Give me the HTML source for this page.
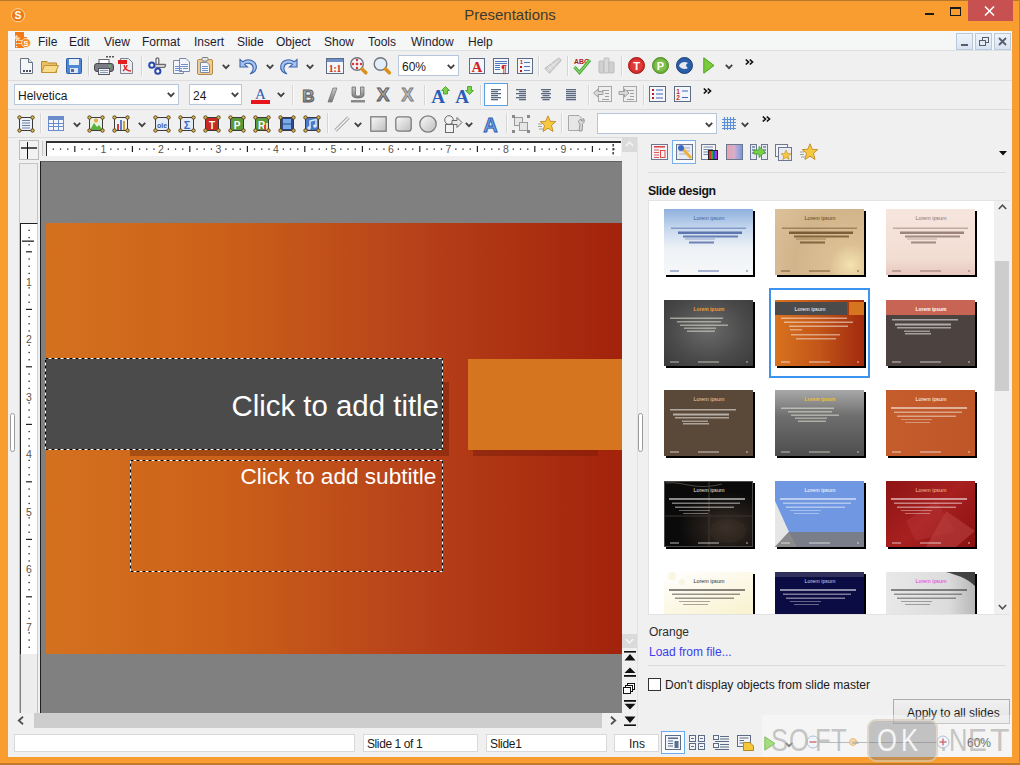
<!DOCTYPE html><html><head><meta charset="utf-8"><style>
*{margin:0;padding:0;box-sizing:border-box}
html,body{width:1020px;height:765px;overflow:hidden}
body{background:#F99D30;font-family:"Liberation Sans",sans-serif;position:relative;font-size:12px;color:#000}
.a{position:absolute}
.t{white-space:nowrap;line-height:1}
svg{overflow:visible}
</style></head><body><div class="a" style="left:0px;top:0px;width:1020px;height:1px;background:#B8782C"></div>
<div class="a" style="left:0px;top:763px;width:1020px;height:2px;background:#C07A2A"></div>
<div class="a" style="left:1019px;top:0px;width:1px;height:765px;background:#C8822C"></div>
<div class="a t" style="left:0px;top:7px;width:1020px;text-align:center;font-size:15px;color:#3C3A36">Presentations</div>
<svg class="a" style="left:10px;top:7px" width="17" height="17" viewBox="0 0 17 17" ><circle cx="8" cy="8.3" r="6.6" fill="#F07812" stroke="#FBE0B0" stroke-width="0.9"/><text x="8" y="12" font-family="Liberation Sans" font-weight="bold" font-size="10.5" fill="#fff" text-anchor="middle">S</text></svg>
<div class="a" style="left:925px;top:13px;width:9px;height:2px;background:#1A1A1A"></div>
<div class="a" style="left:950px;top:7px;width:11px;height:9px;border:1px solid #1A1A1A;border-top-width:2px"></div>
<div class="a" style="left:968px;top:0px;width:45px;height:21px;background:#C75050"></div>
<svg class="a" style="left:983px;top:6px" width="14" height="10" viewBox="0 0 14 10" ><path d="M2 0.5 L11 9.5 M11 0.5 L2 9.5" stroke="#fff" stroke-width="1.6"/></svg>
<div class="a" style="left:8px;top:31px;width:1004px;height:726px;background:#F0F0F0"></div>
<div class="a" style="left:8px;top:31px;width:1004px;height:20px;background:#F5F6F6;border-bottom:1px solid #DEDFE0"></div>
<svg class="a" style="left:14px;top:32px" width="20" height="18" viewBox="0 0 20 18" ><rect x="1" y="0" width="9" height="16" fill="#F27A18"/><path d="M3.5 3 A2.5 2.5 0 1 0 6 5.5 H3.5 Z" fill="#FCD8A8"/><rect x="2" y="8" width="1.2" height="1.2" fill="#fff"/><rect x="2" y="11" width="1.2" height="1.2" fill="#fff"/><rect x="2" y="14" width="1.2" height="1.2" fill="#fff"/><rect x="4" y="8" width="4" height="1" fill="#FCD8A8"/><rect x="4" y="11" width="4" height="1" fill="#FCD8A8"/><rect x="10" y="5" width="3" height="1.5" fill="#F27A18"/><circle cx="12" cy="11" r="4.5" fill="#F28A20" stroke="#FDE8C8" stroke-width="0.9"/><text x="12" y="14" font-family="Liberation Sans" font-weight="bold" font-size="7.5" fill="#fff" text-anchor="middle">S</text></svg>
<div class="a t" style="left:38px;top:35.5px;font-size:12px;color:#1E1B2E">File</div>
<div class="a t" style="left:69px;top:35.5px;font-size:12px;color:#1E1B2E">Edit</div>
<div class="a t" style="left:104px;top:35.5px;font-size:12px;color:#1E1B2E">View</div>
<div class="a t" style="left:142px;top:35.5px;font-size:12px;color:#1E1B2E">Format</div>
<div class="a t" style="left:194px;top:35.5px;font-size:12px;color:#1E1B2E">Insert</div>
<div class="a t" style="left:237px;top:35.5px;font-size:12px;color:#1E1B2E">Slide</div>
<div class="a t" style="left:276px;top:35.5px;font-size:12px;color:#1E1B2E">Object</div>
<div class="a t" style="left:324px;top:35.5px;font-size:12px;color:#1E1B2E">Show</div>
<div class="a t" style="left:368px;top:35.5px;font-size:12px;color:#1E1B2E">Tools</div>
<div class="a t" style="left:411px;top:35.5px;font-size:12px;color:#1E1B2E">Window</div>
<div class="a t" style="left:468px;top:35.5px;font-size:12px;color:#1E1B2E">Help</div>
<div class="a" style="left:956px;top:33px;width:17px;height:17px;background:linear-gradient(#EEF3FA,#D9E4F2);border:1px solid #B9C9DD"></div>
<div class="a" style="left:975px;top:33px;width:17px;height:17px;background:linear-gradient(#EEF3FA,#D9E4F2);border:1px solid #B9C9DD"></div>
<div class="a" style="left:994px;top:33px;width:17px;height:17px;background:linear-gradient(#EEF3FA,#D9E4F2);border:1px solid #B9C9DD"></div>
<div class="a" style="left:961px;top:44px;width:7px;height:2px;background:#555E6A"></div>
<svg class="a" style="left:979px;top:37px" width="10" height="9" viewBox="0 0 10 9" ><rect x="3.5" y="0.5" width="6" height="5" fill="none" stroke="#555E6A"/><rect x="0.5" y="3.5" width="6" height="5" fill="#E3EAF4" stroke="#555E6A"/></svg>
<svg class="a" style="left:998px;top:37px" width="9" height="9" viewBox="0 0 9 9" ><path d="M1 1 L8 8 M8 1 L1 8" stroke="#555E6A" stroke-width="1.8"/></svg>
<div class="a" style="left:8px;top:52px;width:1004px;height:29px;background:#F0F0F0;border-bottom:1px solid #DCDCDC"></div>
<div class="a" style="left:8px;top:81px;width:1004px;height:29px;background:#F0F0F0;border-bottom:1px solid #DCDCDC"></div>
<div class="a" style="left:8px;top:110px;width:1004px;height:28px;background:#F0F0F0;border-bottom:1px solid #DCDCDC"></div>
<svg class="a" style="left:20px;top:58px" width="13" height="16" viewBox="0 0 13 16" ><path d="M0.5 0.5 H8.5 L12.5 4.5 V15.5 H0.5 Z" fill="#F4F6FA" stroke="#6A7384"/><path d="M8.5 0.5 V4.5 H12.5" fill="#DDE3EC" stroke="#6A7384"/><rect x="3" y="12" width="2" height="2" fill="#4A5260"/><rect x="6" y="12" width="2" height="2" fill="#4A5260"/><rect x="9" y="12" width="2" height="2" fill="#4A5260"/></svg>
<svg class="a" style="left:41px;top:60px" width="18" height="13" viewBox="0 0 18 13" ><path d="M0.5 1.5 H6 L7.5 3 H15.5 V12.5 H0.5 Z" fill="#E9C060" stroke="#B88A2A"/><path d="M0.5 12.5 L3.5 5.5 H17.5 L14.5 12.5 Z" fill="#F8DC8A" stroke="#C09238"/></svg>
<svg class="a" style="left:66px;top:58px" width="16" height="16" viewBox="0 0 16 16" ><rect x="0.5" y="0.5" width="15" height="15" rx="1" fill="#4F86D4" stroke="#2E5EA8"/><rect x="3" y="1" width="10" height="6" fill="#E8EEF6"/><rect x="4" y="10" width="8" height="5" fill="#DDE6F2"/><rect x="5" y="11" width="3" height="3" fill="#4F6E9A"/></svg>
<div class="a" style="left:88px;top:56px;width:1px;height:20px;background:#D5D5D5;border-right:1px solid #FAFAFA;width:2px"></div>
<svg class="a" style="left:94px;top:56px" width="20" height="19" viewBox="0 0 20 19" ><rect x="12" y="0" width="2" height="1.5" fill="#555"/><rect x="15" y="0" width="2" height="1.5" fill="#555"/><rect x="18" y="0" width="2" height="1.5" fill="#555"/><rect x="5" y="3.5" width="10" height="5" fill="#fff" stroke="#666"/><rect x="0.5" y="7.5" width="19" height="8" rx="2.5" fill="#7A7E84" stroke="#44484E"/><rect x="15" y="9" width="2" height="2" fill="#5BC25B"/><rect x="4.5" y="12.5" width="11" height="6" fill="#EEF2F6" stroke="#55595F"/><path d="M6 14.5 H14 M6 16.5 H14" stroke="#8A9AB0"/></svg>
<svg class="a" style="left:118px;top:58px" width="16" height="16" viewBox="0 0 16 16" ><path d="M2.5 0.5 H10.5 L14.5 4.5 V15.5 H2.5 Z" fill="#E9ECF0" stroke="#7C818A"/><rect x="0" y="2" width="9" height="4" fill="#E41E1E"/><path d="M6 7 C7 12 10 13 13 13 M5 13 C7 11 9 9 9 7" stroke="#E02828" stroke-width="1.3" fill="none"/></svg>
<div class="a" style="left:141px;top:56px;width:1px;height:20px;background:#D5D5D5;border-right:1px solid #FAFAFA;width:2px"></div>
<svg class="a" style="left:148px;top:57px" width="18" height="18" viewBox="0 0 18 18" ><path d="M8 10 V2 C8 0.5 10.8 0.5 10.8 2 V10" stroke="#6A6A6A" stroke-width="1.3" fill="#F6F6F6"/><path d="M7.5 7.5 H17 C18 7.5 17.5 10.3 16 10.3 H7.5" stroke="#6A6A6A" stroke-width="1.3" fill="#F6F6F6"/><circle cx="3.8" cy="8.2" r="2.6" fill="#F4F8F0" stroke="#2A48B0" stroke-width="2"/><circle cx="9.8" cy="14.2" r="2.6" fill="#F4F8F0" stroke="#2A48B0" stroke-width="2"/></svg>
<svg class="a" style="left:173px;top:58px" width="17" height="16" viewBox="0 0 17 16" ><path d="M0.5 2.5 H7 L10.5 6 V15.5 H0.5 Z" fill="#F2F5FA" stroke="#7A8AA6"/><path d="M6.5 0.5 H13 L16.5 4 V13.5 H6.5 Z" fill="#F2F5FA" stroke="#7A8AA6"/><path d="M2 8.5 H9 M2 10.5 H9 M2 12.5 H9 M8 6.5 H15 M8 8.5 H15 M10 10.5 H15" stroke="#6E8FC8"/></svg>
<svg class="a" style="left:197px;top:57px" width="17" height="18" viewBox="0 0 17 18" ><rect x="0.5" y="2.5" width="15" height="15" rx="1.5" fill="#EFCB8E" stroke="#B58A48"/><rect x="5" y="0.5" width="6" height="3.5" rx="1" fill="#E8E8E8" stroke="#808080"/><path d="M3.5 5.5 H10 L12.5 8 V15.5 H3.5 Z" fill="#F4F6FA" stroke="#7A8AA6"/><path d="M5 9.5 H11 M5 11.5 H11 M5 13.5 H11" stroke="#6E8FC8"/></svg>
<svg class="a" style="left:222px;top:64px" width="8" height="6" viewBox="0 0 8 6" ><path d="M0.8 0.8 L4 4.2 L7.2 0.8" stroke="#404040" stroke-width="1.8" fill="none"/></svg>
<svg class="a" style="left:239px;top:58px" width="18" height="17" viewBox="0 0 18 17" ><path d="M2 2 V9 H9" fill="none" stroke="#3C64B0" stroke-width="0"/><path d="M1 1.5 L1 9 L8.5 9 L5.6 6.3 C8 4.5 13 4.8 14 9 C14.8 12 12.5 15 11 16 C15.5 15 18 11.5 17.2 7.5 C16 2 9 0 3.8 3.8 Z" fill="#A8C4EC" stroke="#3C64B0" stroke-width="1.1"/></svg>
<svg class="a" style="left:266px;top:64px" width="8" height="6" viewBox="0 0 8 6" ><path d="M0.8 0.8 L4 4.2 L7.2 0.8" stroke="#404040" stroke-width="1.8" fill="none"/></svg>
<svg class="a" style="left:280px;top:58px" width="18" height="17" viewBox="0 0 18 17" ><path d="M17 1.5 L17 9 L9.5 9 L12.4 6.3 C10 4.5 5 4.8 4 9 C3.2 12 5.5 15 7 16 C2.5 15 0 11.5 0.8 7.5 C2 2 9 0 14.2 3.8 Z" fill="#A8C4EC" stroke="#3C64B0" stroke-width="1.1"/></svg>
<svg class="a" style="left:306px;top:64px" width="8" height="6" viewBox="0 0 8 6" ><path d="M0.8 0.8 L4 4.2 L7.2 0.8" stroke="#404040" stroke-width="1.8" fill="none"/></svg>
<svg class="a" style="left:326px;top:58px" width="18" height="16" viewBox="0 0 18 16" ><rect x="0.5" y="0.5" width="17" height="15" fill="#F4F6FA" stroke="#5C6C86"/><rect x="1" y="1" width="16" height="3" fill="#6F8FC8"/><text x="9" y="13.5" font-family="Liberation Serif" font-weight="bold" font-size="9.5" fill="#D21E1E" text-anchor="middle">1:1</text></svg>
<svg class="a" style="left:350px;top:57px" width="18" height="18" viewBox="0 0 18 18" ><circle cx="7" cy="7" r="6.3" fill="#F4F4F6" stroke="#707580" stroke-width="1.4"/><path d="M12 12 L15.8 15.8" stroke="#D89020" stroke-width="3.6" stroke-linecap="round"/><rect x="5.8" y="5.8" width="2.4" height="2.4" fill="#D83030"/><circle cx="7" cy="3" r="1.2" fill="#E03030"/><circle cx="7" cy="11" r="1.2" fill="#E03030"/><circle cx="3" cy="7" r="1.2" fill="#E03030"/><circle cx="11" cy="7" r="1.2" fill="#E03030"/></svg>
<svg class="a" style="left:373px;top:57px" width="19" height="18" viewBox="0 0 19 18" ><circle cx="7.5" cy="7" r="6.3" fill="#E2EEF8" stroke="#707580" stroke-width="1.4"/><path d="M12.5 12 L16.3 15.8" stroke="#D89020" stroke-width="3.6" stroke-linecap="round"/></svg>
<div class="a" style="left:398px;top:55px;width:61px;height:21px;background:#fff;border:1px solid #B5C6DC"></div>
<div class="a t" style="left:402px;top:60.5px;font-size:12px;color:#1A1A1A">60%</div>
<svg class="a" style="left:447px;top:64px" width="8" height="6" viewBox="0 0 8 6" ><path d="M0.8 0.8 L4 4.2 L7.2 0.8" stroke="#404040" stroke-width="1.8" fill="none"/></svg>
<svg class="a" style="left:469px;top:58px" width="16" height="16" viewBox="0 0 16 16" ><rect x="0.5" y="0.5" width="15" height="15" fill="#F4F6FA" stroke="#5C6C86"/><text x="8" y="14" font-family="Liberation Serif" font-weight="bold" font-size="15" fill="#D01E1E" text-anchor="middle">A</text></svg>
<svg class="a" style="left:493px;top:58px" width="16" height="16" viewBox="0 0 16 16" ><rect x="0.5" y="0.5" width="15" height="15" fill="#F4F6FA" stroke="#5C6C86"/><path d="M2 3.5 H14 M2 5.5 H14 M2 7.5 H7 M2 9.5 H7 M2 11.5 H7" stroke="#5078C0"/><text x="11" y="14.5" font-family="Liberation Sans" font-weight="bold" font-size="10" fill="#D01E1E" text-anchor="middle">&#182;</text></svg>
<svg class="a" style="left:517px;top:58px" width="16" height="16" viewBox="0 0 16 16" ><rect x="0.5" y="0.5" width="15" height="15" fill="#F4F6FA" stroke="#5C6C86"/><text x="4.5" y="6" font-family="Liberation Sans" font-weight="bold" font-size="6" fill="#C01E1E" text-anchor="middle">1</text><rect x="3" y="8" width="2" height="2" fill="#C01E1E"/><rect x="3" y="12" width="2" height="2" fill="#C01E1E"/><path d="M7 4.5 H13 M7 8.5 H13 M7 12.5 H13" stroke="#5078C0"/></svg>
<div class="a" style="left:538px;top:56px;width:1px;height:20px;background:#D5D5D5;border-right:1px solid #FAFAFA;width:2px"></div>
<svg class="a" style="left:544px;top:57px" width="18" height="17" viewBox="0 0 18 17" ><path d="M0.8 11.5 L5.5 16.2 L16.8 4 C17.5 3 16 1 14.5 1.2 Z" fill="#D4D4D4" stroke="#B4B4B4" stroke-width="0.9"/><path d="M3 14 L14.5 3 M4.5 9 L8 12.5 M7.5 6 L11 9.5" stroke="#EAEAEA" stroke-width="1"/></svg>
<div class="a" style="left:567px;top:56px;width:1px;height:20px;background:#D5D5D5;border-right:1px solid #FAFAFA;width:2px"></div>
<svg class="a" style="left:573px;top:56px" width="19" height="19" viewBox="0 0 19 19" ><text x="1" y="7.5" font-family="Liberation Sans" font-weight="bold" font-size="8" fill="#A81818" textLength="15" lengthAdjust="spacingAndGlyphs">ABC</text><path d="M1.5 11 L6.5 16.5 L17 4" stroke="#4AA83A" stroke-width="3.2" fill="none"/><path d="M1.5 11 L6.5 16.5 L17 4" stroke="#9AE07A" stroke-width="1.1" fill="none"/></svg>
<svg class="a" style="left:598px;top:57px" width="17" height="17" viewBox="0 0 17 17" ><rect x="1" y="4" width="5" height="12" rx="1" fill="#D0D0D0" stroke="#BDBDBD"/><rect x="6" y="1" width="5" height="15" rx="1" fill="#DADADA" stroke="#BDBDBD"/><rect x="11" y="5" width="5" height="11" rx="1" fill="#D0D0D0" stroke="#BDBDBD"/></svg>
<div class="a" style="left:621px;top:56px;width:1px;height:20px;background:#D5D5D5;border-right:1px solid #FAFAFA;width:2px"></div>
<svg class="a" style="left:628px;top:57px" width="17" height="17" viewBox="0 0 17 17" ><circle cx="8.5" cy="8.5" r="8" fill="#D42A2A" stroke="#A01818"/><circle cx="8.5" cy="8.5" r="6" fill="#E23A3A"/><text x="8.5" y="13" font-family="Liberation Sans" font-weight="bold" font-size="11" fill="#fff" text-anchor="middle">T</text></svg>
<svg class="a" style="left:652px;top:57px" width="17" height="17" viewBox="0 0 17 17" ><circle cx="8.5" cy="8.5" r="8" fill="#6EAF3A" stroke="#4C8A24"/><circle cx="8.5" cy="8.5" r="6" fill="#7DC04A"/><text x="8.5" y="13" font-family="Liberation Sans" font-weight="bold" font-size="11" fill="#fff" text-anchor="middle">P</text></svg>
<svg class="a" style="left:676px;top:57px" width="17" height="17" viewBox="0 0 17 17" ><circle cx="8.5" cy="8.5" r="8" fill="#2A5EA8" stroke="#1C3E78"/><path d="M3 9 C4 5 9 4 12 6 C10 7 9 9 12 11 C9 13 5 12 3 9 Z" fill="#E8E8F0"/></svg>
<svg class="a" style="left:703px;top:57px" width="12" height="17" viewBox="0 0 12 17" ><path d="M0.8 0.8 L11 8.5 L0.8 16.2 Z" fill="#7ACC3C" stroke="#48A020"/></svg>
<svg class="a" style="left:725px;top:64px" width="8" height="6" viewBox="0 0 8 6" ><path d="M0.8 0.8 L4 4.2 L7.2 0.8" stroke="#404040" stroke-width="1.8" fill="none"/></svg>
<svg class="a" style="left:745px;top:59px" width="9" height="6" viewBox="0 0 9 6" ><path d="M0.8 0.5 L3.5 3 L0.8 5.5 M4.8 0.5 L7.5 3 L4.8 5.5" stroke="#101010" stroke-width="1.7" fill="none"/></svg>
<div class="a" style="left:14px;top:84px;width:165px;height:21px;background:#fff;border:1px solid #B5C6DC"></div>
<div class="a t" style="left:18px;top:89.5px;font-size:12px;color:#1A1A1A">Helvetica</div>
<svg class="a" style="left:167px;top:92px" width="8" height="6" viewBox="0 0 8 6" ><path d="M0.8 0.8 L4 4.2 L7.2 0.8" stroke="#404040" stroke-width="1.8" fill="none"/></svg>
<div class="a" style="left:189px;top:84px;width:53px;height:21px;background:#fff;border:1px solid #B5C6DC"></div>
<div class="a t" style="left:193px;top:89.5px;font-size:12px;color:#1A1A1A">24</div>
<svg class="a" style="left:231px;top:92px" width="8" height="6" viewBox="0 0 8 6" ><path d="M0.8 0.8 L4 4.2 L7.2 0.8" stroke="#404040" stroke-width="1.8" fill="none"/></svg>
<svg class="a" style="left:251px;top:87px" width="19" height="18" viewBox="0 0 19 18" ><text x="9.5" y="12" font-family="Liberation Serif" font-size="15" fill="#2A5CB8" text-anchor="middle">A</text><rect x="0" y="13" width="19" height="4" fill="#E8141C"/></svg>
<svg class="a" style="left:277px;top:92px" width="8" height="6" viewBox="0 0 8 6" ><path d="M0.8 0.8 L4 4.2 L7.2 0.8" stroke="#404040" stroke-width="1.8" fill="none"/></svg>
<div class="a" style="left:292px;top:85px;width:1px;height:20px;background:#D5D5D5;border-right:1px solid #FAFAFA;width:2px"></div>
<svg class="a" style="left:301px;top:87px" width="15" height="16" viewBox="0 0 15 16" ><defs><linearGradient id="bg3" x1="0" y1="0" x2="0" y2="1"><stop offset="0" stop-color="#C8C8C8"/><stop offset="1" stop-color="#7A7A7A"/></linearGradient></defs><text x="7.5" y="14.5" font-family="Liberation Sans" font-weight="bold" font-size="17" fill="url(#bg3)" stroke="#5A5A5A" stroke-width="0.9" text-anchor="middle">B</text></svg>
<svg class="a" style="left:327px;top:87px" width="11" height="16" viewBox="0 0 11 16" ><path d="M6 1 L10 1 L5 15 L1 15 Z" fill="url(#bg3)" stroke="#707070" stroke-width="0.7"/></svg>
<svg class="a" style="left:350px;top:86px" width="16" height="17" viewBox="0 0 16 17" ><path d="M2 1 V9 C2 13 14 13 14 9 V1 H10.5 V9 C10.5 10.5 5.5 10.5 5.5 9 V1 Z" fill="url(#bg3)" stroke="#606060" stroke-width="0.7"/><rect x="1" y="14" width="14" height="2.5" fill="#8A8A8A"/></svg>
<svg class="a" style="left:375px;top:87px" width="16" height="15" viewBox="0 0 16 15" ><text x="8" y="14" font-family="Liberation Sans" font-weight="bold" font-size="19" fill="url(#bg3)" stroke="#5A5A5A" stroke-width="0.9" text-anchor="middle">X</text></svg>
<svg class="a" style="left:400px;top:87px" width="15" height="15" viewBox="0 0 15 15" ><text x="7.5" y="14" font-family="Liberation Sans" font-weight="bold" font-size="18" fill="#BDBDBD" stroke="#7A7A7A" stroke-width="0.9" text-anchor="middle">X</text></svg>
<div class="a" style="left:424px;top:85px;width:1px;height:20px;background:#D5D5D5;border-right:1px solid #FAFAFA;width:2px"></div>
<svg class="a" style="left:431px;top:86px" width="19" height="18" viewBox="0 0 19 18" ><text x="7" y="17" font-family="Liberation Serif" font-weight="bold" font-size="19" fill="#2A5CB8" text-anchor="middle">A</text><path d="M14.5 0.5 L18.5 4.5 H16.5 V8 H12.5 V4.5 H10.5 Z" fill="#7CD04A" stroke="#3C9A20" stroke-width="0.8"/></svg>
<svg class="a" style="left:455px;top:86px" width="19" height="18" viewBox="0 0 19 18" ><text x="7" y="17" font-family="Liberation Serif" font-weight="bold" font-size="19" fill="#2A5CB8" text-anchor="middle">A</text><path d="M14.5 8.5 L18.5 4.5 H16.5 V0.5 H12.5 V4.5 H10.5 Z" fill="#7CD04A" stroke="#3C9A20" stroke-width="0.8"/></svg>
<div class="a" style="left:480px;top:85px;width:1px;height:20px;background:#D5D5D5;border-right:1px solid #FAFAFA;width:2px"></div>
<div class="a" style="left:484px;top:83px;width:24px;height:23px;background:#fff;border:1px solid #5AA0E6"></div>
<svg class="a" style="left:491px;top:89px" width="10" height="12" viewBox="0 0 10 12" ><rect x="0" y="0" width="10" height="1.3" fill="#5A6880"/><rect x="0" y="2" width="7" height="1.3" fill="#5A6880"/><rect x="0" y="4" width="10" height="1.3" fill="#5A6880"/><rect x="0" y="6" width="7" height="1.3" fill="#5A6880"/><rect x="0" y="8" width="10" height="1.3" fill="#5A6880"/><rect x="0" y="10" width="7" height="1.3" fill="#5A6880"/></svg>
<svg class="a" style="left:516px;top:89px" width="10" height="12" viewBox="0 0 10 12" ><rect x="0" y="0" width="10" height="1.3" fill="#5A6880"/><rect x="3" y="2" width="7" height="1.3" fill="#5A6880"/><rect x="0" y="4" width="10" height="1.3" fill="#5A6880"/><rect x="3" y="6" width="7" height="1.3" fill="#5A6880"/><rect x="0" y="8" width="10" height="1.3" fill="#5A6880"/><rect x="3" y="10" width="7" height="1.3" fill="#5A6880"/></svg>
<svg class="a" style="left:541px;top:89px" width="10" height="12" viewBox="0 0 10 12" ><rect x="0" y="0" width="10" height="1.3" fill="#5A6880"/><rect x="1.5" y="2" width="7" height="1.3" fill="#5A6880"/><rect x="0" y="4" width="10" height="1.3" fill="#5A6880"/><rect x="1.5" y="6" width="7" height="1.3" fill="#5A6880"/><rect x="0" y="8" width="10" height="1.3" fill="#5A6880"/><rect x="1.5" y="10" width="7" height="1.3" fill="#5A6880"/></svg>
<svg class="a" style="left:566px;top:89px" width="10" height="12" viewBox="0 0 10 12" ><rect x="0" y="0" width="10" height="1.3" fill="#5A6880"/><rect x="0" y="2" width="10" height="1.3" fill="#5A6880"/><rect x="0" y="4" width="10" height="1.3" fill="#5A6880"/><rect x="0" y="6" width="10" height="1.3" fill="#5A6880"/><rect x="0" y="8" width="10" height="1.3" fill="#5A6880"/><rect x="0" y="10" width="10" height="1.3" fill="#5A6880"/></svg>
<div class="a" style="left:588px;top:85px;width:1px;height:20px;background:#D5D5D5;border-right:1px solid #FAFAFA;width:2px"></div>
<svg class="a" style="left:593px;top:86px" width="19" height="16" viewBox="0 0 19 16" ><rect x="5.5" y="0.5" width="13" height="15" fill="#EEEEEE" stroke="#A8A8A8"/><path d="M9 4.5 H16 M12 7.5 H16 M12 10.5 H16 M9 13.5 H16" stroke="#A0A0A0"/><path d="M0.5 7 L5 3 V5.5 H10 V8.5 H5 V11 Z" fill="#DADADA" stroke="#A0A0A0"/></svg>
<svg class="a" style="left:618px;top:86px" width="19" height="16" viewBox="0 0 19 16" ><rect x="5.5" y="0.5" width="13" height="15" fill="#EEEEEE" stroke="#A8A8A8"/><path d="M9 4.5 H16 M12 7.5 H16 M12 10.5 H16 M9 13.5 H16" stroke="#A0A0A0"/><path d="M11 7 L6.5 3 V5.5 H1 V8.5 H6.5 V11 Z" fill="#DADADA" stroke="#A0A0A0"/></svg>
<div class="a" style="left:643px;top:85px;width:1px;height:20px;background:#D5D5D5;border-right:1px solid #FAFAFA;width:2px"></div>
<svg class="a" style="left:649px;top:86px" width="17" height="16" viewBox="0 0 17 16" ><rect x="0.5" y="0.5" width="16" height="15" fill="#F4F6FA" stroke="#5C6C86"/><rect x="3" y="3" width="2" height="2" fill="#C01E1E"/><rect x="3" y="7" width="2" height="2" fill="#C01E1E"/><rect x="3" y="11" width="2" height="2" fill="#C01E1E"/><path d="M7 4 H14 M7 8 H14 M7 12 H14" stroke="#3A68B8" stroke-width="1.2"/></svg>
<svg class="a" style="left:674px;top:86px" width="17" height="16" viewBox="0 0 17 16" ><rect x="0.5" y="0.5" width="16" height="15" fill="#F4F6FA" stroke="#5C6C86"/><text x="4" y="7.5" font-family="Liberation Sans" font-weight="bold" font-size="6.5" fill="#C01E1E" text-anchor="middle">1</text><text x="4" y="14" font-family="Liberation Sans" font-weight="bold" font-size="6.5" fill="#C01E1E" text-anchor="middle">2</text><path d="M8 5 H14 M8 11.5 H14" stroke="#3A68B8" stroke-width="1.2"/></svg>
<svg class="a" style="left:703px;top:88px" width="9" height="6" viewBox="0 0 9 6" ><path d="M0.8 0.5 L3.5 3 L0.8 5.5 M4.8 0.5 L7.5 3 L4.8 5.5" stroke="#101010" stroke-width="1.7" fill="none"/></svg>
<svg class="a" style="left:17px;top:115px" width="18" height="18" viewBox="0 0 18 18" ><rect x="3" y="3" width="12" height="12" fill="#EEF2F8"/><path d="M5 5.5 H13 M5 8 H13 M5 10.5 H13 M5 13 H13" stroke="#6A7EA2"/><rect x="2.5" y="2.5" width="13" height="13" fill="none" stroke="#3A3A3A"/><circle cx="2.5" cy="2.5" r="1.7" fill="#E0B850" stroke="#4A3A18" stroke-width="0.9"/><circle cx="15.5" cy="2.5" r="1.7" fill="#E0B850" stroke="#4A3A18" stroke-width="0.9"/><circle cx="2.5" cy="15.5" r="1.7" fill="#E0B850" stroke="#4A3A18" stroke-width="0.9"/><circle cx="15.5" cy="15.5" r="1.7" fill="#E0B850" stroke="#4A3A18" stroke-width="0.9"/></svg>
<div class="a" style="left:40px;top:113px;width:1px;height:20px;background:#D5D5D5;border-right:1px solid #FAFAFA;width:2px"></div>
<svg class="a" style="left:48px;top:116px" width="16" height="15" viewBox="0 0 16 15" ><rect x="0.5" y="0.5" width="15" height="14" fill="#F4F7FC" stroke="#6A8ACB"/><rect x="1" y="1" width="14" height="3" fill="#6A8ACB"/><path d="M0.5 7.5 H15.5 M0.5 10.5 H15.5 M5.5 0.5 V14.5 M10.5 0.5 V14.5" stroke="#6A8ACB"/></svg>
<svg class="a" style="left:73px;top:122px" width="8" height="6" viewBox="0 0 8 6" ><path d="M0.8 0.8 L4 4.2 L7.2 0.8" stroke="#404040" stroke-width="1.8" fill="none"/></svg>
<svg class="a" style="left:87px;top:115px" width="18" height="18" viewBox="0 0 18 18" ><rect x="3" y="3" width="12" height="12" fill="#E8F2E0"/><path d="M3 15 L7 8 L10 12 L12 10 L15 14 V15 Z" fill="#5CB040"/><circle cx="9" cy="5.5" r="2" fill="#F0A040"/><rect x="2.5" y="2.5" width="13" height="13" fill="none" stroke="#3A3A3A"/><circle cx="2.5" cy="2.5" r="1.7" fill="#E0B850" stroke="#4A3A18" stroke-width="0.9"/><circle cx="15.5" cy="2.5" r="1.7" fill="#E0B850" stroke="#4A3A18" stroke-width="0.9"/><circle cx="2.5" cy="15.5" r="1.7" fill="#E0B850" stroke="#4A3A18" stroke-width="0.9"/><circle cx="15.5" cy="15.5" r="1.7" fill="#E0B850" stroke="#4A3A18" stroke-width="0.9"/></svg>
<svg class="a" style="left:112px;top:115px" width="18" height="18" viewBox="0 0 18 18" ><rect x="3" y="3" width="12" height="12" fill="#F2F2F2"/><rect x="5" y="9" width="2" height="6" fill="#D04040"/><rect x="8" y="5" width="2" height="10" fill="#5A80C0"/><rect x="11" y="6" width="2" height="9" fill="#D0A040"/><rect x="2.5" y="2.5" width="13" height="13" fill="none" stroke="#3A3A3A"/><circle cx="2.5" cy="2.5" r="1.7" fill="#E0B850" stroke="#4A3A18" stroke-width="0.9"/><circle cx="15.5" cy="2.5" r="1.7" fill="#E0B850" stroke="#4A3A18" stroke-width="0.9"/><circle cx="2.5" cy="15.5" r="1.7" fill="#E0B850" stroke="#4A3A18" stroke-width="0.9"/><circle cx="15.5" cy="15.5" r="1.7" fill="#E0B850" stroke="#4A3A18" stroke-width="0.9"/></svg>
<svg class="a" style="left:138px;top:122px" width="8" height="6" viewBox="0 0 8 6" ><path d="M0.8 0.8 L4 4.2 L7.2 0.8" stroke="#404040" stroke-width="1.8" fill="none"/></svg>
<svg class="a" style="left:153px;top:115px" width="18" height="18" viewBox="0 0 18 18" ><rect x="3" y="3" width="12" height="12" fill="#E6ECF6"/><text x="9" y="12.5" font-family="Liberation Sans" font-weight="bold" font-size="7" fill="#3A5A9A" text-anchor="middle">ole</text><rect x="2.5" y="2.5" width="13" height="13" fill="none" stroke="#3A3A3A"/><circle cx="2.5" cy="2.5" r="1.7" fill="#E0B850" stroke="#4A3A18" stroke-width="0.9"/><circle cx="15.5" cy="2.5" r="1.7" fill="#E0B850" stroke="#4A3A18" stroke-width="0.9"/><circle cx="2.5" cy="15.5" r="1.7" fill="#E0B850" stroke="#4A3A18" stroke-width="0.9"/><circle cx="15.5" cy="15.5" r="1.7" fill="#E0B850" stroke="#4A3A18" stroke-width="0.9"/></svg>
<svg class="a" style="left:178px;top:115px" width="18" height="18" viewBox="0 0 18 18" ><rect x="3" y="3" width="12" height="12" fill="#E6ECF6"/><text x="9" y="13.5" font-family="Liberation Sans" font-weight="bold" font-size="11" fill="#3A6AC8" text-anchor="middle">&#931;</text><rect x="2.5" y="2.5" width="13" height="13" fill="none" stroke="#3A3A3A"/><circle cx="2.5" cy="2.5" r="1.7" fill="#E0B850" stroke="#4A3A18" stroke-width="0.9"/><circle cx="15.5" cy="2.5" r="1.7" fill="#E0B850" stroke="#4A3A18" stroke-width="0.9"/><circle cx="2.5" cy="15.5" r="1.7" fill="#E0B850" stroke="#4A3A18" stroke-width="0.9"/><circle cx="15.5" cy="15.5" r="1.7" fill="#E0B850" stroke="#4A3A18" stroke-width="0.9"/></svg>
<svg class="a" style="left:203px;top:115px" width="18" height="18" viewBox="0 0 18 18" ><rect x="3" y="3" width="12" height="12" fill="#C82A22"/><text x="9" y="13.5" font-family="Liberation Sans" font-weight="bold" font-size="10" fill="#fff" text-anchor="middle">T</text><rect x="2.5" y="2.5" width="13" height="13" fill="none" stroke="#3A3A3A"/><circle cx="2.5" cy="2.5" r="1.7" fill="#E0B850" stroke="#4A3A18" stroke-width="0.9"/><circle cx="15.5" cy="2.5" r="1.7" fill="#E0B850" stroke="#4A3A18" stroke-width="0.9"/><circle cx="2.5" cy="15.5" r="1.7" fill="#E0B850" stroke="#4A3A18" stroke-width="0.9"/><circle cx="15.5" cy="15.5" r="1.7" fill="#E0B850" stroke="#4A3A18" stroke-width="0.9"/></svg>
<svg class="a" style="left:228px;top:115px" width="18" height="18" viewBox="0 0 18 18" ><rect x="3" y="3" width="12" height="12" fill="#5A9A38"/><text x="9" y="13.5" font-family="Liberation Sans" font-weight="bold" font-size="10" fill="#fff" text-anchor="middle">P</text><rect x="2.5" y="2.5" width="13" height="13" fill="none" stroke="#3A3A3A"/><circle cx="2.5" cy="2.5" r="1.7" fill="#E0B850" stroke="#4A3A18" stroke-width="0.9"/><circle cx="15.5" cy="2.5" r="1.7" fill="#E0B850" stroke="#4A3A18" stroke-width="0.9"/><circle cx="2.5" cy="15.5" r="1.7" fill="#E0B850" stroke="#4A3A18" stroke-width="0.9"/><circle cx="15.5" cy="15.5" r="1.7" fill="#E0B850" stroke="#4A3A18" stroke-width="0.9"/></svg>
<svg class="a" style="left:253px;top:115px" width="18" height="18" viewBox="0 0 18 18" ><rect x="3" y="3" width="12" height="12" fill="#5A9A38"/><text x="8.5" y="13.5" font-family="Liberation Sans" font-weight="bold" font-size="10" fill="#fff" text-anchor="middle">R</text><rect x="11" y="10" width="2" height="5" fill="#E04040"/><rect x="13" y="8" width="2" height="7" fill="#F0E0A0"/><rect x="2.5" y="2.5" width="13" height="13" fill="none" stroke="#3A3A3A"/><circle cx="2.5" cy="2.5" r="1.7" fill="#E0B850" stroke="#4A3A18" stroke-width="0.9"/><circle cx="15.5" cy="2.5" r="1.7" fill="#E0B850" stroke="#4A3A18" stroke-width="0.9"/><circle cx="2.5" cy="15.5" r="1.7" fill="#E0B850" stroke="#4A3A18" stroke-width="0.9"/><circle cx="15.5" cy="15.5" r="1.7" fill="#E0B850" stroke="#4A3A18" stroke-width="0.9"/></svg>
<svg class="a" style="left:278px;top:115px" width="18" height="18" viewBox="0 0 18 18" ><rect x="3" y="3" width="12" height="12" fill="#2A4A8A"/><rect x="5" y="4" width="8" height="4.5" fill="#7AAAE8"/><rect x="5" y="9.5" width="8" height="4.5" fill="#7AAAE8"/><rect x="2.5" y="2.5" width="13" height="13" fill="none" stroke="#3A3A3A"/><circle cx="2.5" cy="2.5" r="1.7" fill="#E0B850" stroke="#4A3A18" stroke-width="0.9"/><circle cx="15.5" cy="2.5" r="1.7" fill="#E0B850" stroke="#4A3A18" stroke-width="0.9"/><circle cx="2.5" cy="15.5" r="1.7" fill="#E0B850" stroke="#4A3A18" stroke-width="0.9"/><circle cx="15.5" cy="15.5" r="1.7" fill="#E0B850" stroke="#4A3A18" stroke-width="0.9"/></svg>
<svg class="a" style="left:303px;top:115px" width="18" height="18" viewBox="0 0 18 18" ><rect x="3" y="3" width="12" height="12" fill="#4A7AC8"/><path d="M7 13 V6 L13 4.5 V11" stroke="#D8E8FA" stroke-width="1.5" fill="none"/><circle cx="6" cy="13" r="1.8" fill="#D8E8FA"/><circle cx="12" cy="11" r="1.8" fill="#D8E8FA"/><rect x="2.5" y="2.5" width="13" height="13" fill="none" stroke="#3A3A3A"/><circle cx="2.5" cy="2.5" r="1.7" fill="#E0B850" stroke="#4A3A18" stroke-width="0.9"/><circle cx="15.5" cy="2.5" r="1.7" fill="#E0B850" stroke="#4A3A18" stroke-width="0.9"/><circle cx="2.5" cy="15.5" r="1.7" fill="#E0B850" stroke="#4A3A18" stroke-width="0.9"/><circle cx="15.5" cy="15.5" r="1.7" fill="#E0B850" stroke="#4A3A18" stroke-width="0.9"/></svg>
<div class="a" style="left:327px;top:113px;width:1px;height:20px;background:#D5D5D5;border-right:1px solid #FAFAFA;width:2px"></div>
<svg class="a" style="left:334px;top:116px" width="16" height="16" viewBox="0 0 16 16" ><path d="M1.5 14.5 L14.5 1.5" stroke="#A8A8A8" stroke-width="3.5"/><path d="M1.5 14.5 L14.5 1.5" stroke="#F4F4F4" stroke-width="1.5"/></svg>
<svg class="a" style="left:354px;top:122px" width="8" height="6" viewBox="0 0 8 6" ><path d="M0.8 0.8 L4 4.2 L7.2 0.8" stroke="#404040" stroke-width="1.8" fill="none"/></svg>
<svg class="a" style="left:370px;top:116px" width="17" height="16" viewBox="0 0 17 16" ><defs><linearGradient id="gg" x1="0" y1="0" x2="1" y2="1"><stop offset="0" stop-color="#FAFAFA"/><stop offset="1" stop-color="#BDBDBD"/></linearGradient></defs><rect x="0.8" y="0.8" width="15.4" height="14.4" fill="url(#gg)" stroke="#7C7C7C" stroke-width="1.3"/></svg>
<svg class="a" style="left:395px;top:116px" width="17" height="16" viewBox="0 0 17 16" ><rect x="0.8" y="0.8" width="15.4" height="14.4" rx="3" fill="url(#gg)" stroke="#7C7C7C" stroke-width="1.3"/></svg>
<svg class="a" style="left:419px;top:115px" width="18" height="18" viewBox="0 0 18 18" ><circle cx="9" cy="9" r="8.2" fill="url(#gg)" stroke="#7C7C7C" stroke-width="1.3"/></svg>
<svg class="a" style="left:444px;top:115px" width="19" height="18" viewBox="0 0 19 18" ><circle cx="5" cy="5" r="4.3" fill="#F2F2F2" stroke="#6A6A6A"/><path d="M8 5.5 H13 V2.5 L18 7.5 L13 12.5 V9.5 H8 Z" fill="#E8E8E8" stroke="#6A6A6A"/><rect x="1.5" y="9.5" width="8" height="8" fill="#F2F2F2" stroke="#6A6A6A"/></svg>
<svg class="a" style="left:465px;top:122px" width="8" height="6" viewBox="0 0 8 6" ><path d="M0.8 0.8 L4 4.2 L7.2 0.8" stroke="#404040" stroke-width="1.8" fill="none"/></svg>
<svg class="a" style="left:481px;top:115px" width="19" height="18" viewBox="0 0 19 18" ><text x="9.5" y="17" font-family="Liberation Sans" font-weight="bold" font-size="20" fill="#6A9AE0" stroke="#2A5AB0" stroke-width="0.8" text-anchor="middle">A</text></svg>
<div class="a" style="left:506px;top:113px;width:1px;height:20px;background:#D5D5D5;border-right:1px solid #FAFAFA;width:2px"></div>
<svg class="a" style="left:512px;top:115px" width="18" height="18" viewBox="0 0 18 18" ><rect x="2.5" y="2.5" width="8" height="8" fill="#E6E6E6" stroke="#9A9A9A"/><rect x="7.5" y="7.5" width="8" height="8" fill="#E6E6E6" stroke="#9A9A9A"/><rect x="0" y="0" width="3" height="3" fill="#8A8A8A"/><rect x="15" y="0" width="3" height="3" fill="#8A8A8A"/><rect x="0" y="15" width="3" height="3" fill="#8A8A8A"/><rect x="15" y="15" width="3" height="3" fill="#8A8A8A"/></svg>
<svg class="a" style="left:538px;top:115px" width="18" height="18" viewBox="0 0 18 18" ><path d="M10 0.8 L12.3 6.3 L17.8 6.6 L13.5 10.2 L15 16.5 L10 13.2 L5 16.5 L6.5 10.2 L2.2 6.6 L7.7 6.3 Z" fill="#F6C840" stroke="#C08A20" stroke-width="0.9"/><path d="M0 9 H4 M0 11.5 H4 M1 14 H5" stroke="#A0A0A0"/></svg>
<div class="a" style="left:561px;top:113px;width:1px;height:20px;background:#D5D5D5;border-right:1px solid #FAFAFA;width:2px"></div>
<svg class="a" style="left:568px;top:114px" width="18" height="18" viewBox="0 0 18 18" ><path d="M0.5 1.5 H11 L14 4.5 V16.5 H0.5 Z" fill="#E6E6E6" stroke="#A8A8A8"/><path d="M13 5 C10 6 10 9 12 10 L11 17 H14 L14.5 10 C16.5 9 17 6 15.5 4.5 L15 7 H13.5 Z" fill="#D8D8D8" stroke="#8A8A8A" stroke-width="0.8"/></svg>
<div class="a" style="left:597px;top:113px;width:120px;height:21px;background:#fff;border:1px solid #B5C6DC"></div>
<svg class="a" style="left:705px;top:122px" width="8" height="6" viewBox="0 0 8 6" ><path d="M0.8 0.8 L4 4.2 L7.2 0.8" stroke="#404040" stroke-width="1.8" fill="none"/></svg>
<svg class="a" style="left:722px;top:117px" width="14" height="13" viewBox="0 0 14 13" ><path d="M0 2.5 H14 M0 5.5 H14 M0 8.5 H14 M0 11.5 H14 M2.5 0 V13 M5.5 0 V13 M8.5 0 V13 M11.5 0 V13" stroke="#5A90D8" stroke-width="1.1"/></svg>
<svg class="a" style="left:741px;top:122px" width="8" height="6" viewBox="0 0 8 6" ><path d="M0.8 0.8 L4 4.2 L7.2 0.8" stroke="#404040" stroke-width="1.8" fill="none"/></svg>
<svg class="a" style="left:762px;top:116px" width="9" height="6" viewBox="0 0 9 6" ><path d="M0.8 0.5 L3.5 3 L0.8 5.5 M4.8 0.5 L7.5 3 L4.8 5.5" stroke="#101010" stroke-width="1.7" fill="none"/></svg>
<div class="a" style="left:19px;top:140px;width:20px;height:20px;background:#F2F2F2;border:1px solid #BDBDBD"></div>
<div class="a" style="left:21px;top:147px;width:16px;height:2px;background:#555555"></div>
<div class="a" style="left:27px;top:142px;width:1px;height:17px;background:#111111"></div>
<div class="a" style="left:42px;top:141px;width:579px;height:15px;background:#EAEAEA;border-left:1px solid #C8C8C8"></div>
<div class="a" style="left:46px;top:141px;width:575px;height:15px;background:#FFFFFF;border-top:2px solid #303030;border-left:1px solid #303030"></div>
<svg class="a" style="left:46px;top:141px" width="575" height="15" viewBox="0 0 575 15" ><rect x="6.7" y="7.5" width="1.3" height="1.3" fill="#222"/><rect x="13.9" y="7.5" width="1.3" height="1.3" fill="#222"/><rect x="21.1" y="7.5" width="1.3" height="1.3" fill="#222"/><rect x="28.2" y="5" width="1.2" height="6" fill="#222"/><rect x="35.4" y="7.5" width="1.3" height="1.3" fill="#222"/><rect x="42.6" y="7.5" width="1.3" height="1.3" fill="#222"/><rect x="49.8" y="7.5" width="1.3" height="1.3" fill="#222"/><text x="57.5" y="12" font-family="Liberation Sans" font-size="10.5" fill="#5E5248" text-anchor="middle">1</text><rect x="64.2" y="7.5" width="1.3" height="1.3" fill="#222"/><rect x="71.4" y="7.5" width="1.3" height="1.3" fill="#222"/><rect x="78.6" y="7.5" width="1.3" height="1.3" fill="#222"/><rect x="85.8" y="5" width="1.2" height="6" fill="#222"/><rect x="92.9" y="7.5" width="1.3" height="1.3" fill="#222"/><rect x="100.1" y="7.5" width="1.3" height="1.3" fill="#222"/><rect x="107.3" y="7.5" width="1.3" height="1.3" fill="#222"/><text x="115.0" y="12" font-family="Liberation Sans" font-size="10.5" fill="#5E5248" text-anchor="middle">2</text><rect x="121.7" y="7.5" width="1.3" height="1.3" fill="#222"/><rect x="128.9" y="7.5" width="1.3" height="1.3" fill="#222"/><rect x="136.1" y="7.5" width="1.3" height="1.3" fill="#222"/><rect x="143.2" y="5" width="1.2" height="6" fill="#222"/><rect x="150.4" y="7.5" width="1.3" height="1.3" fill="#222"/><rect x="157.6" y="7.5" width="1.3" height="1.3" fill="#222"/><rect x="164.8" y="7.5" width="1.3" height="1.3" fill="#222"/><text x="172.5" y="12" font-family="Liberation Sans" font-size="10.5" fill="#5E5248" text-anchor="middle">3</text><rect x="179.2" y="7.5" width="1.3" height="1.3" fill="#222"/><rect x="186.4" y="7.5" width="1.3" height="1.3" fill="#222"/><rect x="193.6" y="7.5" width="1.3" height="1.3" fill="#222"/><rect x="200.8" y="5" width="1.2" height="6" fill="#222"/><rect x="207.9" y="7.5" width="1.3" height="1.3" fill="#222"/><rect x="215.1" y="7.5" width="1.3" height="1.3" fill="#222"/><rect x="222.3" y="7.5" width="1.3" height="1.3" fill="#222"/><text x="230.0" y="12" font-family="Liberation Sans" font-size="10.5" fill="#5E5248" text-anchor="middle">4</text><rect x="236.7" y="7.5" width="1.3" height="1.3" fill="#222"/><rect x="243.9" y="7.5" width="1.3" height="1.3" fill="#222"/><rect x="251.1" y="7.5" width="1.3" height="1.3" fill="#222"/><rect x="258.2" y="5" width="1.2" height="6" fill="#222"/><rect x="265.4" y="7.5" width="1.3" height="1.3" fill="#222"/><rect x="272.6" y="7.5" width="1.3" height="1.3" fill="#222"/><rect x="279.8" y="7.5" width="1.3" height="1.3" fill="#222"/><text x="287.5" y="12" font-family="Liberation Sans" font-size="10.5" fill="#5E5248" text-anchor="middle">5</text><rect x="294.2" y="7.5" width="1.3" height="1.3" fill="#222"/><rect x="301.4" y="7.5" width="1.3" height="1.3" fill="#222"/><rect x="308.6" y="7.5" width="1.3" height="1.3" fill="#222"/><rect x="315.8" y="5" width="1.2" height="6" fill="#222"/><rect x="322.9" y="7.5" width="1.3" height="1.3" fill="#222"/><rect x="330.1" y="7.5" width="1.3" height="1.3" fill="#222"/><rect x="337.3" y="7.5" width="1.3" height="1.3" fill="#222"/><text x="345.0" y="12" font-family="Liberation Sans" font-size="10.5" fill="#5E5248" text-anchor="middle">6</text><rect x="351.7" y="7.5" width="1.3" height="1.3" fill="#222"/><rect x="358.9" y="7.5" width="1.3" height="1.3" fill="#222"/><rect x="366.1" y="7.5" width="1.3" height="1.3" fill="#222"/><rect x="373.2" y="5" width="1.2" height="6" fill="#222"/><rect x="380.4" y="7.5" width="1.3" height="1.3" fill="#222"/><rect x="387.6" y="7.5" width="1.3" height="1.3" fill="#222"/><rect x="394.8" y="7.5" width="1.3" height="1.3" fill="#222"/><text x="402.5" y="12" font-family="Liberation Sans" font-size="10.5" fill="#5E5248" text-anchor="middle">7</text><rect x="409.2" y="7.5" width="1.3" height="1.3" fill="#222"/><rect x="416.4" y="7.5" width="1.3" height="1.3" fill="#222"/><rect x="423.6" y="7.5" width="1.3" height="1.3" fill="#222"/><rect x="430.8" y="5" width="1.2" height="6" fill="#222"/><rect x="437.9" y="7.5" width="1.3" height="1.3" fill="#222"/><rect x="445.1" y="7.5" width="1.3" height="1.3" fill="#222"/><rect x="452.3" y="7.5" width="1.3" height="1.3" fill="#222"/><text x="460.0" y="12" font-family="Liberation Sans" font-size="10.5" fill="#5E5248" text-anchor="middle">8</text><rect x="466.7" y="7.5" width="1.3" height="1.3" fill="#222"/><rect x="473.9" y="7.5" width="1.3" height="1.3" fill="#222"/><rect x="481.1" y="7.5" width="1.3" height="1.3" fill="#222"/><rect x="488.2" y="5" width="1.2" height="6" fill="#222"/><rect x="495.4" y="7.5" width="1.3" height="1.3" fill="#222"/><rect x="502.6" y="7.5" width="1.3" height="1.3" fill="#222"/><rect x="509.8" y="7.5" width="1.3" height="1.3" fill="#222"/><text x="517.5" y="12" font-family="Liberation Sans" font-size="10.5" fill="#5E5248" text-anchor="middle">9</text><rect x="524.2" y="7.5" width="1.3" height="1.3" fill="#222"/><rect x="531.4" y="7.5" width="1.3" height="1.3" fill="#222"/><rect x="538.6" y="7.5" width="1.3" height="1.3" fill="#222"/><rect x="545.8" y="5" width="1.2" height="6" fill="#222"/><rect x="552.9" y="7.5" width="1.3" height="1.3" fill="#222"/><rect x="560.1" y="7.5" width="1.3" height="1.3" fill="#222"/><rect x="567.3" y="7.5" width="1.3" height="1.3" fill="#222"/><rect x="566.5" y="3" width="1.3" height="2.5" fill="#222"/><rect x="566.5" y="7" width="1.3" height="2.5" fill="#222"/><rect x="566.5" y="11" width="1.3" height="2.5" fill="#222"/></svg>
<div class="a" style="left:40px;top:161px;width:582px;height:552px;background:#808080;border-left:1px solid #1E1E1E;border-top:1px solid #606060"></div>
<div class="a" style="left:19px;top:163px;width:19px;height:550px;background:#EDEDED;border:1px solid #C4C4C4;border-bottom:none"></div>
<div class="a" style="left:20px;top:223px;width:18px;height:431px;background:#FFFFFF;border-top:1px solid #202020;border-left:1px solid #202020;border-right:1px solid #D0D0D0"></div>
<div class="a" style="left:20px;top:654px;width:1px;height:59px;background:#808080"></div>
<svg class="a" style="left:20px;top:223px" width="17" height="431" viewBox="0 0 17 431" ><rect x="8.5" y="6.7" width="1.3" height="1.3" fill="#222"/><rect x="8.5" y="13.9" width="1.3" height="1.3" fill="#222"/><rect x="8.5" y="21.1" width="1.3" height="1.3" fill="#222"/><rect x="6" y="28.2" width="6" height="1.2" fill="#222"/><rect x="8.5" y="35.4" width="1.3" height="1.3" fill="#222"/><rect x="8.5" y="42.6" width="1.3" height="1.3" fill="#222"/><rect x="8.5" y="49.8" width="1.3" height="1.3" fill="#222"/><text x="9" y="62.5" font-family="Liberation Sans" font-size="10.5" fill="#5E5248" text-anchor="middle">1</text><rect x="8.5" y="64.2" width="1.3" height="1.3" fill="#222"/><rect x="8.5" y="71.4" width="1.3" height="1.3" fill="#222"/><rect x="8.5" y="78.6" width="1.3" height="1.3" fill="#222"/><rect x="6" y="85.8" width="6" height="1.2" fill="#222"/><rect x="8.5" y="92.9" width="1.3" height="1.3" fill="#222"/><rect x="8.5" y="100.1" width="1.3" height="1.3" fill="#222"/><rect x="8.5" y="107.3" width="1.3" height="1.3" fill="#222"/><text x="9" y="120.0" font-family="Liberation Sans" font-size="10.5" fill="#5E5248" text-anchor="middle">2</text><rect x="8.5" y="121.7" width="1.3" height="1.3" fill="#222"/><rect x="8.5" y="128.9" width="1.3" height="1.3" fill="#222"/><rect x="8.5" y="136.1" width="1.3" height="1.3" fill="#222"/><rect x="6" y="143.2" width="6" height="1.2" fill="#222"/><rect x="8.5" y="150.4" width="1.3" height="1.3" fill="#222"/><rect x="8.5" y="157.6" width="1.3" height="1.3" fill="#222"/><rect x="8.5" y="164.8" width="1.3" height="1.3" fill="#222"/><text x="9" y="177.5" font-family="Liberation Sans" font-size="10.5" fill="#5E5248" text-anchor="middle">3</text><rect x="8.5" y="179.2" width="1.3" height="1.3" fill="#222"/><rect x="8.5" y="186.4" width="1.3" height="1.3" fill="#222"/><rect x="8.5" y="193.6" width="1.3" height="1.3" fill="#222"/><rect x="6" y="200.8" width="6" height="1.2" fill="#222"/><rect x="8.5" y="207.9" width="1.3" height="1.3" fill="#222"/><rect x="8.5" y="215.1" width="1.3" height="1.3" fill="#222"/><rect x="8.5" y="222.3" width="1.3" height="1.3" fill="#222"/><text x="9" y="235.0" font-family="Liberation Sans" font-size="10.5" fill="#5E5248" text-anchor="middle">4</text><rect x="8.5" y="236.7" width="1.3" height="1.3" fill="#222"/><rect x="8.5" y="243.9" width="1.3" height="1.3" fill="#222"/><rect x="8.5" y="251.1" width="1.3" height="1.3" fill="#222"/><rect x="6" y="258.2" width="6" height="1.2" fill="#222"/><rect x="8.5" y="265.4" width="1.3" height="1.3" fill="#222"/><rect x="8.5" y="272.6" width="1.3" height="1.3" fill="#222"/><rect x="8.5" y="279.8" width="1.3" height="1.3" fill="#222"/><text x="9" y="292.5" font-family="Liberation Sans" font-size="10.5" fill="#5E5248" text-anchor="middle">5</text><rect x="8.5" y="294.2" width="1.3" height="1.3" fill="#222"/><rect x="8.5" y="301.4" width="1.3" height="1.3" fill="#222"/><rect x="8.5" y="308.6" width="1.3" height="1.3" fill="#222"/><rect x="6" y="315.8" width="6" height="1.2" fill="#222"/><rect x="8.5" y="322.9" width="1.3" height="1.3" fill="#222"/><rect x="8.5" y="330.1" width="1.3" height="1.3" fill="#222"/><rect x="8.5" y="337.3" width="1.3" height="1.3" fill="#222"/><text x="9" y="350.0" font-family="Liberation Sans" font-size="10.5" fill="#5E5248" text-anchor="middle">6</text><rect x="8.5" y="351.7" width="1.3" height="1.3" fill="#222"/><rect x="8.5" y="358.9" width="1.3" height="1.3" fill="#222"/><rect x="8.5" y="366.1" width="1.3" height="1.3" fill="#222"/><rect x="6" y="373.2" width="6" height="1.2" fill="#222"/><rect x="8.5" y="380.4" width="1.3" height="1.3" fill="#222"/><rect x="8.5" y="387.6" width="1.3" height="1.3" fill="#222"/><rect x="8.5" y="394.8" width="1.3" height="1.3" fill="#222"/><text x="9" y="407.5" font-family="Liberation Sans" font-size="10.5" fill="#5E5248" text-anchor="middle">7</text><rect x="8.5" y="409.2" width="1.3" height="1.3" fill="#222"/><rect x="8.5" y="416.4" width="1.3" height="1.3" fill="#222"/><rect x="8.5" y="423.6" width="1.3" height="1.3" fill="#222"/><rect x="2" y="17.5" width="12" height="1.3" fill="#222"/></svg>
<div class="a" style="left:46px;top:223px;width:576px;height:431px;background:linear-gradient(to right,#D4711F 0%,#CC6119 30%,#B8431A 62%,#A2220B 100%)"></div>
<div class="a" style="left:130px;top:450px;width:319px;height:6px;background:rgba(60,10,0,0.28)"></div>
<div class="a" style="left:442px;top:382px;width:7px;height:68px;background:rgba(60,10,0,0.28)"></div>
<div class="a" style="left:473px;top:449px;width:125px;height:7px;background:linear-gradient(to right,rgba(80,10,0,0.3),rgba(80,10,0,0.22))"></div>
<div class="a" style="left:468px;top:359px;width:154px;height:91px;background:#D57520"></div>
<div class="a" style="left:45px;top:358px;width:398px;height:92px;background:#4B4B4B"></div>
<svg class="a" style="left:45px;top:358px" width="398" height="92" viewBox="0 0 398 92" ><rect x="0.5" y="0.5" width="397" height="91" fill="none" stroke="#fff" stroke-width="1"/><rect x="0.5" y="0.5" width="397" height="91" fill="none" stroke="#000" stroke-width="1" stroke-dasharray="3 3"/></svg>
<div class="a t" style="left:231.5px;top:391px;font-size:29.4px;color:#fff">Click to add title</div>
<svg class="a" style="left:130px;top:460px" width="313" height="112" viewBox="0 0 313 112" ><rect x="0.5" y="0.5" width="312" height="111" fill="none" stroke="#fff" stroke-width="1"/><rect x="0.5" y="0.5" width="312" height="111" fill="none" stroke="#000" stroke-width="1" stroke-dasharray="3 3"/></svg>
<div class="a t" style="left:240.5px;top:466px;font-size:22.6px;color:#fff">Click to add subtitle</div>
<div class="a" style="left:8px;top:713px;width:614px;height:15px;background:#F0F0F0"></div>
<div class="a" style="left:34px;top:713px;width:568px;height:15px;background:#CDCDCD"></div>
<svg class="a" style="left:17px;top:716px" width="8" height="9" viewBox="0 0 8 9" ><path d="M6 0.8 L1.8 4.5 L6 8.2" stroke="#505050" stroke-width="1.8" fill="none"/></svg>
<svg class="a" style="left:609px;top:716px" width="8" height="9" viewBox="0 0 8 9" ><path d="M2 0.8 L6.2 4.5 L2 8.2" stroke="#505050" stroke-width="1.8" fill="none"/></svg>
<div class="a" style="left:622px;top:137px;width:16px;height:591px;background:#F0F0F0;border-right:1px solid #E2E2E2"></div>
<div class="a" style="left:622px;top:137px;width:15px;height:15px;background:#DADADA"></div>
<svg class="a" style="left:625px;top:141px" width="9" height="6" viewBox="0 0 9 6" ><path d="M0.8 5 L4.5 1.2 L8.2 5" stroke="#F4F4F4" stroke-width="1.5" fill="none"/></svg>
<div class="a" style="left:622px;top:634px;width:15px;height:14px;background:#DADADA"></div>
<svg class="a" style="left:625px;top:638px" width="9" height="6" viewBox="0 0 9 6" ><path d="M0.8 1 L4.5 4.8 L8.2 1" stroke="#F4F4F4" stroke-width="1.5" fill="none"/></svg>
<svg class="a" style="left:624px;top:651px" width="12" height="10" viewBox="0 0 12 10" ><rect x="0" y="0" width="12" height="1.6" fill="#111"/><path d="M0.5 9.5 L6 3 L11.5 9.5 Z" fill="#111"/></svg>
<svg class="a" style="left:624px;top:667px" width="12" height="10" viewBox="0 0 12 10" ><path d="M0.5 6 L6 0.5 L11.5 6 Z" fill="#111"/><rect x="0" y="8" width="12" height="1.8" fill="#111"/></svg>
<svg class="a" style="left:623px;top:683px" width="12" height="11" viewBox="0 0 12 11" ><rect x="4.5" y="0.5" width="7" height="6" fill="#fff" stroke="#111"/><rect x="2.5" y="2.5" width="7" height="6" fill="#fff" stroke="#111"/><rect x="0.5" y="4.5" width="7" height="6" fill="#fff" stroke="#111"/></svg>
<svg class="a" style="left:624px;top:700px" width="12" height="10" viewBox="0 0 12 10" ><rect x="0" y="0" width="12" height="1.8" fill="#111"/><path d="M0.5 3.8 L6 9.5 L11.5 3.8 Z" fill="#111"/></svg>
<svg class="a" style="left:624px;top:716px" width="12" height="10" viewBox="0 0 12 10" ><path d="M0.5 0.5 L6 7 L11.5 0.5 Z" fill="#111"/><rect x="0" y="8.4" width="12" height="1.6" fill="#111"/></svg>
<div class="a" style="left:10px;top:413px;width:5px;height:39px;background:#fff;border:1px solid #9A9A9A;border-radius:3px"></div>
<div class="a" style="left:638px;top:137px;width:374px;height:591px;background:#F0F0F0"></div>
<div class="a" style="left:672px;top:140px;width:24px;height:24px;background:#F8FBFE;border:1px solid #7AAEE8"></div>
<svg class="a" style="left:651px;top:144px" width="18" height="17" viewBox="0 0 18 17" ><rect x="0.5" y="0.5" width="16" height="15" fill="#F2F4F8" stroke="#6C7890"/><rect x="3" y="2" width="11" height="1.6" fill="#E04848"/><path d="M3 6 H8 M3 8.5 H8 M3 11 H8 M3 13.5 H8" stroke="#E05858" stroke-width="1.2"/><rect x="9.5" y="6.5" width="4.5" height="7" fill="none" stroke="#E04848"/></svg>
<svg class="a" style="left:676px;top:144px" width="18" height="17" viewBox="0 0 18 17" ><rect x="0.5" y="0.5" width="16" height="15" fill="#E8ECF2" stroke="#6C7890"/><path d="M3 4 H14 M3 7 H14 M3 10 H10" stroke="#A8B4C8"/><path d="M5 3 L15 14" stroke="#F0B040" stroke-width="3"/><circle cx="5" cy="4" r="3" fill="#3A6AC8"/></svg>
<svg class="a" style="left:701px;top:144px" width="18" height="17" viewBox="0 0 18 17" ><rect x="0.5" y="0.5" width="14" height="15" fill="#F2F4F8" stroke="#6C7890"/><path d="M2.5 3 H12 M2.5 5.5 H12 M2.5 8 H7 M2.5 10.5 H7" stroke="#7A88A0"/><rect x="7" y="6" width="10" height="10" fill="#222"/><rect x="8" y="7" width="2" height="8" fill="#E03030"/><rect x="10" y="7" width="2" height="8" fill="#30B030"/><rect x="12" y="7" width="2" height="8" fill="#3050E0"/><rect x="14" y="7" width="2" height="8" fill="#B030D0"/></svg>
<svg class="a" style="left:726px;top:144px" width="18" height="17" viewBox="0 0 18 17" ><defs><linearGradient id="tg4" x1="0" y1="0" x2="1" y2="0"><stop offset="0" stop-color="#F0A0A0"/><stop offset="0.5" stop-color="#D0B0D0"/><stop offset="1" stop-color="#7098E0"/></linearGradient></defs><rect x="0.5" y="0.5" width="16" height="15" fill="url(#tg4)" stroke="#6C7890"/></svg>
<svg class="a" style="left:750px;top:144px" width="18" height="17" viewBox="0 0 18 17" ><rect x="0.5" y="0.5" width="6" height="15" fill="#E8ECF2" stroke="#6C7890"/><rect x="11.5" y="0.5" width="6" height="15" fill="#E8ECF2" stroke="#6C7890"/><path d="M2 3 H5 M2 6 H5 M2 9 H5 M13 3 H16 M13 6 H16 M13 9 H16" stroke="#2A4A8A"/><path d="M4 6 H9 V2.5 L15 8 L9 13.5 V10 H4 Z" fill="#7AD04A" stroke="#3C9A20" stroke-width="0.8"/></svg>
<svg class="a" style="left:775px;top:144px" width="18" height="17" viewBox="0 0 18 17" ><rect x="0.5" y="0.5" width="12" height="12" fill="#F2F4F8" stroke="#6C7890"/><rect x="3.5" y="3.5" width="13" height="13" fill="#E8ECF2" stroke="#6C7890"/><path d="M11 6 L12.5 9.5 L16 9.8 L13.3 12 L14.2 15.5 L11 13.5 L7.8 15.5 L8.7 12 L6 9.8 L9.5 9.5 Z" fill="#F6C840" stroke="#C08A20" stroke-width="0.6"/></svg>
<svg class="a" style="left:800px;top:143px" width="18" height="18" viewBox="0 0 18 18" ><path d="M10 0.8 L12.3 6.3 L17.8 6.6 L13.5 10.2 L15 16.5 L10 13.2 L5 16.5 L6.5 10.2 L2.2 6.6 L7.7 6.3 Z" fill="#F6C840" stroke="#C08A20" stroke-width="0.9"/><path d="M0 9 H4 M0 11.5 H4 M1 14 H5" stroke="#A0A0A0"/></svg>
<svg class="a" style="left:999px;top:151px" width="8" height="5" viewBox="0 0 8 5" ><path d="M0 0 H8 L4 4.5 Z" fill="#111"/></svg>
<div class="a" style="left:648px;top:172px;width:358px;height:1px;background:#DCDCDC"></div>
<div class="a t" style="left:648px;top:184.5px;font-size:12.3px;font-weight:bold;color:#141414;letter-spacing:-0.4px">Slide design</div>
<div class="a" style="left:648px;top:200px;width:362px;height:415px;background:#fff;border:1px solid #E3E3E3"></div>
<div class="a" style="left:994px;top:201px;width:16px;height:413px;background:#F0F0F0"></div>
<div class="a" style="left:995px;top:261px;width:14px;height:130px;background:#CDCDCD"></div>
<svg class="a" style="left:998px;top:204px" width="9" height="6" viewBox="0 0 9 6" ><path d="M0.8 5 L4.5 1.2 L8.2 5" stroke="#505050" stroke-width="1.6" fill="none"/></svg>
<svg class="a" style="left:998px;top:604px" width="9" height="6" viewBox="0 0 9 6" ><path d="M0.8 1 L4.5 4.8 L8.2 1" stroke="#505050" stroke-width="1.6" fill="none"/></svg>
<div class="a" style="left:648px;top:201px;width:346px;height:413px;overflow:hidden"><div class="a" style="left:16px;top:8px;width:89px;height:66px;background:linear-gradient(to bottom,#8FB0DE 0%,#C6D8EE 30%,#EEF2F6 60%,#F6F7F9 100%);box-shadow:2px 2px 0 #000;overflow:hidden"><svg width="89" height="66" style="position:absolute;left:0;top:0"><rect x="7" y="18.5" width="75" height="1.5" fill="#1E3C8A" opacity="0.38"/><rect x="14" y="22.5" width="64" height="2.5" fill="#1E3C8A" opacity="0.64"/><rect x="19" y="26.5" width="55" height="2" fill="#1E3C8A" opacity="0.59"/><rect x="21" y="29.5" width="30" height="1" fill="#1E3C8A" opacity="0.38"/><rect x="25" y="32.5" width="25" height="2" fill="#1E3C8A" opacity="0.59"/><text x="45" y="10.5" font-family="Liberation Sans" font-size="5.8" font-weight="normal" fill="#3A5A9A" text-anchor="middle" textLength="31" lengthAdjust="spacingAndGlyphs">Lorem ipsum</text><rect x="6" y="61.5" width="9" height="1" fill="#1E3C8A" opacity="0.7"/><rect x="34" y="61.5" width="21" height="1" fill="#1E3C8A" opacity="0.7"/><rect x="82" y="61.5" width="2" height="1" fill="#1E3C8A" opacity="0.7"/></svg></div><div class="a" style="left:127px;top:8px;width:89px;height:66px;background:radial-gradient(circle at 85% 85%,#F4E2B0 0%,#DCC094 22%,#D2B48A 60%,#DCC29A 100%);box-shadow:2px 2px 0 #000;overflow:hidden"><svg width="89" height="66" style="position:absolute;left:0;top:0"><rect x="7" y="18.5" width="75" height="1.5" fill="#4A2A08" opacity="0.38"/><rect x="14" y="22.5" width="64" height="2.5" fill="#4A2A08" opacity="0.64"/><rect x="19" y="26.5" width="55" height="2" fill="#4A2A08" opacity="0.59"/><rect x="21" y="29.5" width="30" height="1" fill="#4A2A08" opacity="0.38"/><rect x="25" y="32.5" width="25" height="2" fill="#4A2A08" opacity="0.59"/><text x="45" y="10.5" font-family="Liberation Sans" font-size="5.8" font-weight="normal" fill="#5A4020" text-anchor="middle" textLength="31" lengthAdjust="spacingAndGlyphs">Lorem ipsum</text><rect x="6" y="61.5" width="9" height="1" fill="#4A2A08" opacity="0.7"/><rect x="34" y="61.5" width="21" height="1" fill="#4A2A08" opacity="0.7"/><rect x="82" y="61.5" width="2" height="1" fill="#4A2A08" opacity="0.7"/></svg></div><div class="a" style="left:238px;top:8px;width:89px;height:66px;background:linear-gradient(to bottom,#F6E6DE 0%,#F2DDD2 75%,#E8C8C0 100%);box-shadow:2px 2px 0 #000;overflow:hidden"><svg width="89" height="66" style="position:absolute;left:0;top:0"><rect x="7" y="18.5" width="75" height="1.5" fill="#6A5048" opacity="0.38"/><rect x="14" y="22.5" width="64" height="2.5" fill="#6A5048" opacity="0.64"/><rect x="19" y="26.5" width="55" height="2" fill="#6A5048" opacity="0.59"/><rect x="21" y="29.5" width="30" height="1" fill="#6A5048" opacity="0.38"/><rect x="25" y="32.5" width="25" height="2" fill="#6A5048" opacity="0.59"/><text x="45" y="10.5" font-family="Liberation Sans" font-size="5.8" font-weight="normal" fill="#8A7068" text-anchor="middle" textLength="31" lengthAdjust="spacingAndGlyphs">Lorem ipsum</text><rect x="6" y="61.5" width="9" height="1" fill="#6A5048" opacity="0.7"/><rect x="34" y="61.5" width="21" height="1" fill="#6A5048" opacity="0.7"/><rect x="82" y="61.5" width="2" height="1" fill="#6A5048" opacity="0.7"/></svg></div><div class="a" style="left:16px;top:99px;width:89px;height:66px;background:radial-gradient(ellipse at 50% 45%,#6A6A6A 0%,#4A4A4A 60%,#3A3A3A 100%);box-shadow:2px 2px 0 #000;overflow:hidden"><svg width="89" height="66" style="position:absolute;left:0;top:0"><rect x="6" y="17.5" width="53" height="1.5" fill="#F2F0E0" opacity="0.53"/><rect x="13" y="21" width="44" height="1.5" fill="#F2F0E0" opacity="0.50"/><rect x="16" y="24.5" width="48" height="1.5" fill="#F2F0E0" opacity="0.50"/><rect x="20" y="27.5" width="32" height="1.5" fill="#F2F0E0" opacity="0.46"/><rect x="23" y="30.5" width="28" height="1.5" fill="#F2F0E0" opacity="0.50"/><text x="45" y="10.5" font-family="Liberation Sans" font-size="5.8" font-weight="bold" fill="#F0A030" text-anchor="middle" textLength="31" lengthAdjust="spacingAndGlyphs">Lorem ipsum</text><rect x="6" y="61.5" width="9" height="1" fill="#F2F0E0" opacity="0.7"/><rect x="34" y="61.5" width="21" height="1" fill="#F2F0E0" opacity="0.7"/><rect x="82" y="61.5" width="2" height="1" fill="#F2F0E0" opacity="0.7"/></svg></div><div class="a" style="left:127px;top:99px;width:89px;height:66px;background:linear-gradient(to right,#D8731F 0%,#C25518 50%,#A22A0E 100%);box-shadow:2px 2px 0 #000;overflow:hidden"><svg width="89" height="66" style="position:absolute;left:0;top:0"><rect x="0" y="2" width="72" height="13" fill="#4B4B4B"/><rect x="74" y="2" width="15" height="13" fill="#D57520"/><rect x="6" y="17.5" width="66" height="1.5" fill="#FFFFFF" opacity="0.50"/><rect x="9" y="21.5" width="69" height="1.5" fill="#FFFFFF" opacity="0.50"/><rect x="14" y="25.5" width="59" height="1.5" fill="#FFFFFF" opacity="0.50"/><rect x="15" y="29" width="12" height="1.5" fill="#FFFFFF" opacity="0.43"/><rect x="16" y="34" width="49" height="1.5" fill="#FFFFFF" opacity="0.46"/><rect x="21" y="38" width="40" height="1.5" fill="#FFFFFF" opacity="0.46"/><text x="35" y="10.5" font-family="Liberation Sans" font-size="5.8" font-weight="normal" fill="#FFFFFF" text-anchor="middle" textLength="31" lengthAdjust="spacingAndGlyphs">Lorem ipsum</text><rect x="6" y="61.5" width="9" height="1" fill="#FFFFFF" opacity="0.7"/><rect x="34" y="61.5" width="21" height="1" fill="#FFFFFF" opacity="0.7"/><rect x="82" y="61.5" width="2" height="1" fill="#FFFFFF" opacity="0.7"/></svg></div><div class="a" style="left:238px;top:99px;width:89px;height:66px;background:#4C4240;box-shadow:2px 2px 0 #000;overflow:hidden"><svg width="89" height="66" style="position:absolute;left:0;top:0"><rect x="0" y="0" width="89" height="15" fill="#C86454"/><rect x="6" y="19" width="66" height="1.5" fill="#FFFFFF" opacity="0.53"/><rect x="9" y="23.5" width="56" height="2" fill="#FFFFFF" opacity="0.56"/><rect x="11" y="27" width="54" height="1.5" fill="#FFFFFF" opacity="0.50"/><rect x="18" y="30.5" width="26" height="1.5" fill="#FFFFFF" opacity="0.46"/><rect x="19" y="33" width="26" height="1.5" fill="#FFFFFF" opacity="0.50"/><text x="45" y="10.5" font-family="Liberation Sans" font-size="5.8" font-weight="bold" fill="#FFFFFF" text-anchor="middle" textLength="31" lengthAdjust="spacingAndGlyphs">Lorem ipsum</text><rect x="6" y="61.5" width="9" height="1" fill="#FFFFFF" opacity="0.7"/><rect x="34" y="61.5" width="21" height="1" fill="#FFFFFF" opacity="0.7"/><rect x="82" y="61.5" width="2" height="1" fill="#FFFFFF" opacity="0.7"/></svg></div><div class="a" style="left:16px;top:189px;width:89px;height:66px;background:#5A4838;box-shadow:2px 2px 0 #000;overflow:hidden"><svg width="89" height="66" style="position:absolute;left:0;top:0"><rect x="6" y="19" width="66" height="1.5" fill="#FFFFFF" opacity="0.53"/><rect x="9" y="23.5" width="56" height="2" fill="#FFFFFF" opacity="0.56"/><rect x="11" y="27" width="54" height="1.5" fill="#FFFFFF" opacity="0.50"/><rect x="18" y="30.5" width="26" height="1.5" fill="#FFFFFF" opacity="0.46"/><rect x="19" y="33" width="26" height="1.5" fill="#FFFFFF" opacity="0.50"/><text x="45" y="10.5" font-family="Liberation Sans" font-size="5.8" font-weight="normal" fill="#F0D0A8" text-anchor="middle" textLength="31" lengthAdjust="spacingAndGlyphs">Lorem ipsum</text><rect x="6" y="61.5" width="9" height="1" fill="#FFFFFF" opacity="0.7"/><rect x="34" y="61.5" width="21" height="1" fill="#FFFFFF" opacity="0.7"/><rect x="82" y="61.5" width="2" height="1" fill="#FFFFFF" opacity="0.7"/></svg></div><div class="a" style="left:127px;top:189px;width:89px;height:66px;background:linear-gradient(to bottom,#A8A8A8 0%,#6E6E6E 40%,#4E4E4E 100%);box-shadow:2px 2px 0 #000;overflow:hidden"><svg width="89" height="66" style="position:absolute;left:0;top:0"><rect x="6" y="17.5" width="53" height="1.5" fill="#F0F0E0" opacity="0.53"/><rect x="13" y="21" width="44" height="1.5" fill="#F0F0E0" opacity="0.50"/><rect x="16" y="24.5" width="48" height="1.5" fill="#F0F0E0" opacity="0.50"/><rect x="20" y="27.5" width="32" height="1.5" fill="#F0F0E0" opacity="0.46"/><rect x="23" y="30.5" width="28" height="1.5" fill="#F0F0E0" opacity="0.50"/><text x="45" y="10.5" font-family="Liberation Sans" font-size="5.8" font-weight="bold" fill="#F0C030" text-anchor="middle" textLength="31" lengthAdjust="spacingAndGlyphs">Lorem ipsum</text><rect x="6" y="61.5" width="9" height="1" fill="#F0F0E0" opacity="0.7"/><rect x="34" y="61.5" width="21" height="1" fill="#F0F0E0" opacity="0.7"/><rect x="82" y="61.5" width="2" height="1" fill="#F0F0E0" opacity="0.7"/></svg></div><div class="a" style="left:238px;top:189px;width:89px;height:66px;background:linear-gradient(to right,#C45C2C,#BE5628);box-shadow:2px 2px 0 #000;overflow:hidden"><svg width="89" height="66" style="position:absolute;left:0;top:0"><rect x="5" y="17" width="76" height="2" fill="#FFFFFF" opacity="0.53"/><rect x="8" y="21.5" width="68" height="1.5" fill="#FFFFFF" opacity="0.46"/><rect x="11" y="25.5" width="59" height="1.5" fill="#FFFFFF" opacity="0.46"/><rect x="15" y="29" width="31" height="1" fill="#FFFFFF" opacity="0.37"/><rect x="19" y="32" width="25" height="1" fill="#FFFFFF" opacity="0.37"/><text x="45" y="10.5" font-family="Liberation Sans" font-size="5.8" font-weight="normal" fill="#FFFFFF" text-anchor="middle" textLength="31" lengthAdjust="spacingAndGlyphs">Lorem ipsum</text><rect x="6" y="61.5" width="9" height="1" fill="#FFFFFF" opacity="0.7"/><rect x="34" y="61.5" width="21" height="1" fill="#FFFFFF" opacity="0.7"/><rect x="82" y="61.5" width="2" height="1" fill="#FFFFFF" opacity="0.7"/></svg></div><div class="a" style="left:16px;top:280px;width:89px;height:66px;background:radial-gradient(ellipse at 70% 70%,#3A2E26 0%,#0A0A0A 55%);box-shadow:2px 2px 0 #000;overflow:hidden"><svg width="89" height="66" style="position:absolute;left:0;top:0"><path d="M2 2 C20 0 30 10 58 3" stroke="#6A6058" stroke-width="1" fill="none" opacity="0.7"/><path d="M45 0 V66 M0 35 H89" stroke="#3A3430" stroke-width="1.2" fill="none"/><rect x="0.5" y="0.5" width="88" height="65" fill="none" stroke="#4A4A4A"/><ellipse cx="64" cy="50" rx="18" ry="12" fill="#4A3A30" opacity="0.22"/><rect x="5" y="17" width="76" height="2" fill="#FFFFFF" opacity="0.53"/><rect x="8" y="21.5" width="68" height="1.5" fill="#FFFFFF" opacity="0.46"/><rect x="11" y="25.5" width="59" height="1.5" fill="#FFFFFF" opacity="0.46"/><rect x="15" y="29" width="31" height="1" fill="#FFFFFF" opacity="0.37"/><rect x="19" y="32" width="25" height="1" fill="#FFFFFF" opacity="0.37"/><text x="45" y="10.5" font-family="Liberation Sans" font-size="5.8" font-weight="normal" fill="#E8E8E8" text-anchor="middle" textLength="31" lengthAdjust="spacingAndGlyphs">Lorem ipsum</text><rect x="6" y="61.5" width="9" height="1" fill="#FFFFFF" opacity="0.7"/><rect x="34" y="61.5" width="21" height="1" fill="#FFFFFF" opacity="0.7"/><rect x="82" y="61.5" width="2" height="1" fill="#FFFFFF" opacity="0.7"/></svg></div><div class="a" style="left:127px;top:280px;width:89px;height:66px;background:#7098E2;box-shadow:2px 2px 0 #000;overflow:hidden"><svg width="89" height="66" style="position:absolute;left:0;top:0"><path d="M0 20 L14 51 L0 66 Z" fill="#E6E6E6"/><path d="M0 66 L14 51 H89 V66 Z" fill="#7A7E88"/><path d="M0 66 L14 51 L22 66 Z" fill="#8A8A8A"/><rect x="5" y="17" width="76" height="2" fill="#FFFFFF" opacity="0.53"/><rect x="8" y="21.5" width="68" height="1.5" fill="#FFFFFF" opacity="0.46"/><rect x="11" y="25.5" width="59" height="1.5" fill="#FFFFFF" opacity="0.46"/><rect x="15" y="29" width="31" height="1" fill="#FFFFFF" opacity="0.37"/><rect x="19" y="32" width="25" height="1" fill="#FFFFFF" opacity="0.37"/><text x="45" y="10.5" font-family="Liberation Sans" font-size="5.8" font-weight="normal" fill="#FFFFFF" text-anchor="middle" textLength="31" lengthAdjust="spacingAndGlyphs">Lorem ipsum</text><rect x="6" y="61.5" width="9" height="1" fill="#FFFFFF" opacity="0.7"/><rect x="34" y="61.5" width="21" height="1" fill="#FFFFFF" opacity="0.7"/><rect x="82" y="61.5" width="2" height="1" fill="#FFFFFF" opacity="0.7"/></svg></div><div class="a" style="left:238px;top:280px;width:89px;height:66px;background:linear-gradient(135deg,#8E1414 0%,#A82020 50%,#8A1010 100%);box-shadow:2px 2px 0 #000;overflow:hidden"><svg width="89" height="66" style="position:absolute;left:0;top:0"><path d="M40 66 L60 30 L89 50 L70 66 Z" fill="#C04848" opacity="0.5"/><path d="M20 40 L50 20 L70 50 L30 60 Z" fill="#B83A3A" opacity="0.4"/><rect x="5" y="17" width="76" height="2" fill="#FFFFFF" opacity="0.53"/><rect x="8" y="21.5" width="68" height="1.5" fill="#FFFFFF" opacity="0.46"/><rect x="11" y="25.5" width="59" height="1.5" fill="#FFFFFF" opacity="0.46"/><rect x="15" y="29" width="31" height="1" fill="#FFFFFF" opacity="0.37"/><rect x="19" y="32" width="25" height="1" fill="#FFFFFF" opacity="0.37"/><text x="45" y="10.5" font-family="Liberation Sans" font-size="5.8" font-weight="normal" fill="#F0C0A0" text-anchor="middle" textLength="31" lengthAdjust="spacingAndGlyphs">Lorem ipsum</text><rect x="6" y="61.5" width="9" height="1" fill="#FFFFFF" opacity="0.7"/><rect x="34" y="61.5" width="21" height="1" fill="#FFFFFF" opacity="0.7"/><rect x="82" y="61.5" width="2" height="1" fill="#FFFFFF" opacity="0.7"/></svg></div><div class="a" style="left:16px;top:371px;width:89px;height:66px;background:linear-gradient(160deg,#FFFFFF 0%,#FBF6DE 50%,#F6EEC2 100%);box-shadow:2px 2px 0 #000;overflow:hidden"><svg width="89" height="66" style="position:absolute;left:0;top:0"><circle cx="8" cy="4" r="4" fill="#F4ECC0" opacity="0.4"/><circle cx="18" cy="10" r="3" fill="#F0E8C8" opacity="0.4"/><rect x="5" y="17" width="76" height="2" fill="#1A1A1A" opacity="0.53"/><rect x="8" y="21.5" width="68" height="1.5" fill="#1A1A1A" opacity="0.46"/><rect x="11" y="25.5" width="59" height="1.5" fill="#1A1A1A" opacity="0.46"/><rect x="15" y="29" width="31" height="1" fill="#1A1A1A" opacity="0.37"/><rect x="19" y="32" width="25" height="1" fill="#1A1A1A" opacity="0.37"/><text x="45" y="10.5" font-family="Liberation Sans" font-size="5.8" font-weight="normal" fill="#2A2A2A" text-anchor="middle" textLength="31" lengthAdjust="spacingAndGlyphs">Lorem ipsum</text><rect x="6" y="61.5" width="9" height="1" fill="#1A1A1A" opacity="0.7"/><rect x="34" y="61.5" width="21" height="1" fill="#1A1A1A" opacity="0.7"/><rect x="82" y="61.5" width="2" height="1" fill="#1A1A1A" opacity="0.7"/></svg></div><div class="a" style="left:127px;top:371px;width:89px;height:66px;background:#0C0C44;box-shadow:2px 2px 0 #000;overflow:hidden"><svg width="89" height="66" style="position:absolute;left:0;top:0"><rect x="0" y="0" width="89" height="5" fill="#4A4A6A" opacity="0.6"/><rect x="5" y="17" width="76" height="2" fill="#FFFFFF" opacity="0.53"/><rect x="8" y="21.5" width="68" height="1.5" fill="#FFFFFF" opacity="0.46"/><rect x="11" y="25.5" width="59" height="1.5" fill="#FFFFFF" opacity="0.46"/><rect x="15" y="29" width="31" height="1" fill="#FFFFFF" opacity="0.37"/><rect x="19" y="32" width="25" height="1" fill="#FFFFFF" opacity="0.37"/><text x="45" y="10.5" font-family="Liberation Sans" font-size="5.8" font-weight="normal" fill="#C8D0F0" text-anchor="middle" textLength="31" lengthAdjust="spacingAndGlyphs">Lorem ipsum</text><rect x="6" y="61.5" width="9" height="1" fill="#FFFFFF" opacity="0.7"/><rect x="34" y="61.5" width="21" height="1" fill="#FFFFFF" opacity="0.7"/><rect x="82" y="61.5" width="2" height="1" fill="#FFFFFF" opacity="0.7"/></svg></div><div class="a" style="left:238px;top:371px;width:89px;height:66px;background:linear-gradient(to right,#E8E8E8,#DCDCDC 70%,#B8B8B8);box-shadow:2px 2px 0 #000;overflow:hidden"><svg width="89" height="66" style="position:absolute;left:0;top:0"><path d="M60 0 H89 V14 C80 5 70 3 60 0 Z" fill="#202020" opacity="0.8"/><rect x="5" y="17" width="76" height="2" fill="#2A2A2A" opacity="0.53"/><rect x="8" y="21.5" width="68" height="1.5" fill="#2A2A2A" opacity="0.46"/><rect x="11" y="25.5" width="59" height="1.5" fill="#2A2A2A" opacity="0.46"/><rect x="15" y="29" width="31" height="1" fill="#2A2A2A" opacity="0.37"/><rect x="19" y="32" width="25" height="1" fill="#2A2A2A" opacity="0.37"/><text x="45" y="10.5" font-family="Liberation Sans" font-size="5.8" font-weight="normal" fill="#E030E0" text-anchor="middle" textLength="31" lengthAdjust="spacingAndGlyphs">Lorem ipsum</text><rect x="6" y="61.5" width="9" height="1" fill="#2A2A2A" opacity="0.7"/><rect x="34" y="61.5" width="21" height="1" fill="#2A2A2A" opacity="0.7"/><rect x="82" y="61.5" width="2" height="1" fill="#2A2A2A" opacity="0.7"/></svg></div><div class="a" style="left:121px;top:87px;width:101px;height:90px;border:2px solid #3D94F0"></div></div>
<div class="a t" style="left:649px;top:625.5px;font-size:12px;color:#2E2E2E">Orange</div>
<div class="a t" style="left:649px;top:645.5px;font-size:12px;color:#3C3CF0">Load from file...</div>
<div class="a" style="left:648px;top:665px;width:358px;height:1px;background:#DCDCDC"></div>
<div class="a" style="left:648px;top:678px;width:13px;height:13px;background:#fff;border:1px solid #333"></div>
<div class="a t" style="left:665px;top:679px;font-size:12px;color:#1A1A1A">Don&#39;t display objects from slide master</div>
<div class="a" style="left:893px;top:699px;width:117px;height:25px;background:linear-gradient(#F0F0F0,#E4E4E4);border:1px solid #ACACAC"></div>
<div class="a t" style="left:907px;top:706.5px;font-size:12px;color:#1A1A1A">Apply to all slides</div>
<div class="a" style="left:8px;top:728px;width:1004px;height:29px;background:#F0F0F0"></div>
<div class="a" style="left:14px;top:734px;width:341px;height:18px;background:#fff;border:1px solid #D9D9D9"></div>
<div class="a" style="left:363px;top:734px;width:115px;height:18px;background:#fff;border:1px solid #D9D9D9"></div>
<div class="a t" style="left:367px;top:738px;font-size:12px;color:#1A1A1A;letter-spacing:-0.4px">Slide 1 of 1</div>
<div class="a" style="left:486px;top:734px;width:121px;height:18px;background:#fff;border:1px solid #D9D9D9"></div>
<div class="a t" style="left:490px;top:738px;font-size:12px;color:#1A1A1A;letter-spacing:-0.3px">Slide1</div>
<div class="a" style="left:614px;top:734px;width:45px;height:18px;background:#fff;border:1px solid #D9D9D9"></div>
<div class="a t" style="left:629px;top:738px;font-size:12px;color:#1A1A1A">Ins</div>
<div class="a" style="left:661px;top:731px;width:24px;height:23px;background:#FAFCFE;border:1px solid #6AAAEE"></div>
<svg class="a" style="left:665px;top:735px" width="16" height="15" viewBox="0 0 16 15" ><rect x="0.5" y="0.5" width="15" height="14" fill="#F2F4F8" stroke="#5C6C86"/><rect x="3" y="2.5" width="10" height="1.5" fill="#5A6E92"/><path d="M3 6 H8 M3 8.5 H8 M3 11 H8" stroke="#5A6E92"/><rect x="9.5" y="6" width="4" height="7" fill="#5A6E92"/></svg>
<svg class="a" style="left:689px;top:735px" width="16" height="15" viewBox="0 0 16 15" ><rect x="0.5" y="0.5" width="6" height="6" fill="#F2F4F8" stroke="#5C6C86"/><rect x="9.5" y="0.5" width="6" height="6" fill="#F2F4F8" stroke="#5C6C86"/><rect x="0.5" y="8.5" width="6" height="6" fill="#F2F4F8" stroke="#5C6C86"/><rect x="9.5" y="8.5" width="6" height="6" fill="#F2F4F8" stroke="#5C6C86"/><path d="M2 3.5 H5 M11 3.5 H14 M2 11.5 H5 M11 11.5 H14" stroke="#5C6C86"/></svg>
<svg class="a" style="left:713px;top:735px" width="16" height="15" viewBox="0 0 16 15" ><rect x="0.5" y="0.5" width="5" height="4" fill="#F2F4F8" stroke="#5C6C86"/><path d="M7 1.5 H16 M7 4 H16 M2 6.5 H16 M0 9 H4" stroke="#5C6C86"/><rect x="0.5" y="8.5" width="5" height="4" fill="#F2F4F8" stroke="#5C6C86"/><path d="M7 9.5 H16 M7 12 H16 M2 14.5 H16" stroke="#5C6C86"/></svg>
<svg class="a" style="left:737px;top:735px" width="17" height="16" viewBox="0 0 17 16" ><rect x="0.5" y="0.5" width="13" height="11" fill="#F2F4F8" stroke="#5C6C86"/><path d="M2.5 3 H11.5 M2.5 5.5 H7 M2.5 8 H7" stroke="#5C6C86"/><path d="M6.5 7.5 H13 L16.5 11 V15.5 H6.5 Z" fill="#F4C838" stroke="#B08A20"/></svg>
<svg class="a" style="left:764px;top:736px" width="12" height="15" viewBox="0 0 12 15" ><path d="M0.8 0.8 L11 7.5 L0.8 14.2 Z" fill="#7ACC3C" stroke="#48A020"/></svg>
<svg class="a" style="left:785px;top:742px" width="8" height="6" viewBox="0 0 8 6" ><path d="M0.8 0.8 L4 4.2 L7.2 0.8" stroke="#404040" stroke-width="1.8" fill="none"/></svg>
<div class="a" style="left:820px;top:742px;width:116px;height:1px;background:#9A9A9A"></div>
<svg class="a" style="left:806px;top:735px" width="14" height="14" viewBox="0 0 14 14" ><circle cx="7" cy="7" r="6" fill="#E8F0FA" stroke="#8AA0C0"/><rect x="3.5" y="6.3" width="7" height="1.4" fill="#C02020"/></svg>
<svg class="a" style="left:936px;top:735px" width="14" height="14" viewBox="0 0 14 14" ><circle cx="7" cy="7" r="6" fill="#E8F0FA" stroke="#8AA0C0"/><rect x="3.5" y="6.3" width="7" height="1.4" fill="#C02020"/><rect x="6.3" y="3.5" width="1.4" height="7" fill="#C02020"/></svg>
<svg class="a" style="left:849px;top:738px" width="8" height="8" viewBox="0 0 8 8" ><circle cx="4" cy="4" r="3.5" fill="#F0C880" stroke="#D8A040"/></svg>
<div class="a t" style="left:967px;top:737px;font-size:12px;color:#1A1A1A">60%</div>
<div class="a" style="left:638px;top:413px;width:5px;height:39px;background:#fff;border:1px solid #9A9A9A;border-radius:3px"></div>
<div class="a" style="left:762px;top:715px;width:250px;height:42px;background:rgba(255,255,255,0.33)"></div>
<div class="a t" style="left:770.5px;top:724.4px;font-size:32px;color:rgba(165,165,165,0.62);transform:scaleX(0.8);transform-origin:0 0">S</div>
<div class="a t" style="left:788.5px;top:724.4px;font-size:32px;color:rgba(165,165,165,0.62);transform:scaleX(0.8);transform-origin:0 0">O</div>
<div class="a t" style="left:814.5px;top:724.4px;font-size:32px;color:rgba(165,165,165,0.62);transform:scaleX(0.8);transform-origin:0 0">F</div>
<div class="a t" style="left:831px;top:724.4px;font-size:32px;color:rgba(165,165,165,0.62);transform:scaleX(0.8);transform-origin:0 0">T</div>
<div class="a t" style="left:851px;top:724.4px;font-size:32px;color:rgba(165,165,165,0.62);transform:scaleX(0.8);transform-origin:0 0">-</div>
<div class="a" style="left:867px;top:719px;width:71px;height:43px;background:rgba(125,125,125,0.42);border-radius:9px;border:2px solid rgba(255,240,210,0.45)"></div>
<div class="a t" style="left:876.5px;top:724.4px;font-size:32px;color:rgba(255,255,255,0.85);transform:scaleX(0.8);transform-origin:0 0">O</div>
<div class="a t" style="left:900.5px;top:724.4px;font-size:32px;color:rgba(255,255,255,0.85);transform:scaleX(0.8);transform-origin:0 0">K</div>
<div class="a t" style="left:940px;top:724.4px;font-size:32px;color:rgba(165,165,165,0.62);transform:scaleX(0.8);transform-origin:0 0">.</div>
<div class="a t" style="left:948.5px;top:724.4px;font-size:32px;color:rgba(165,165,165,0.62);transform:scaleX(0.8);transform-origin:0 0">N</div>
<div class="a t" style="left:968px;top:724.4px;font-size:32px;color:rgba(165,165,165,0.62);transform:scaleX(0.88);transform-origin:0 0">E</div>
<div class="a t" style="left:990px;top:724.4px;font-size:32px;color:rgba(165,165,165,0.62);transform:scaleX(1.0);transform-origin:0 0">T</div></body></html>
